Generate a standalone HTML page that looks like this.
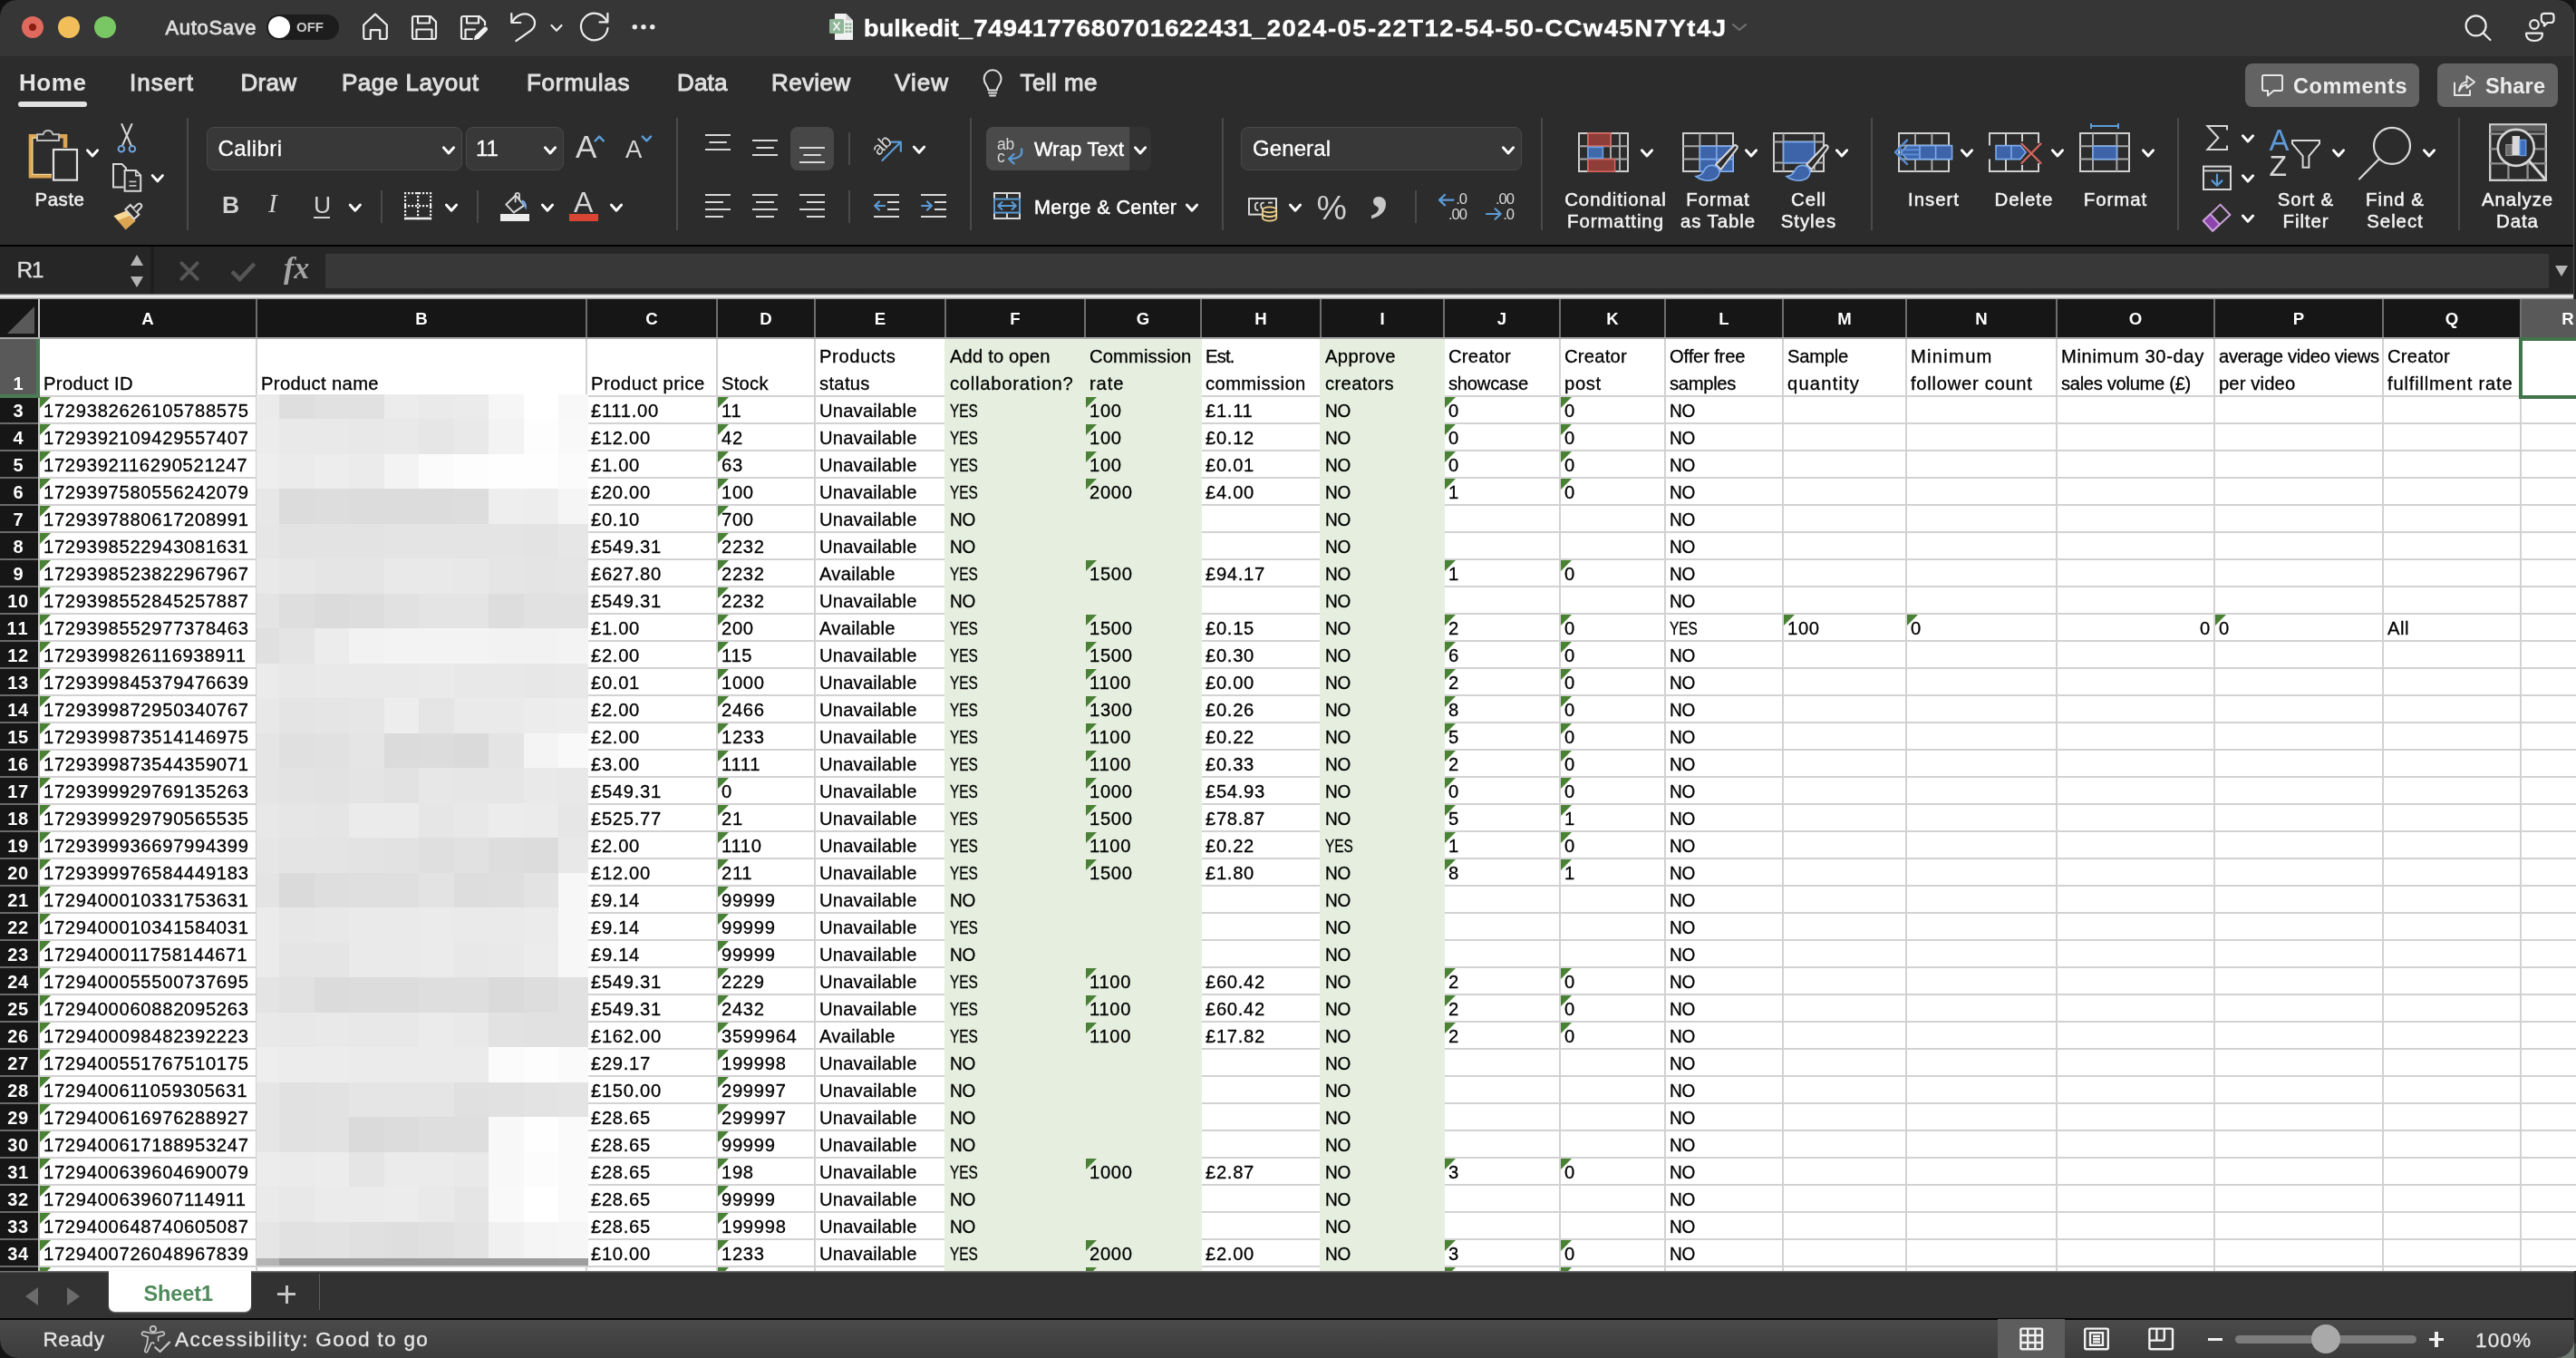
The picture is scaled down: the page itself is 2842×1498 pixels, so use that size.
<!DOCTYPE html>
<html lang="en"><head><meta charset="utf-8"><title>bulkedit - Excel</title>
<style>
html,body{margin:0;padding:0}
body{width:2842px;height:1498px;position:relative;overflow:hidden;will-change:transform;background:#2b2b2b;font-family:"Liberation Sans",sans-serif}
.a{position:absolute}
.t{position:absolute;white-space:nowrap}
.c{position:absolute;white-space:nowrap;font-size:20.2px;line-height:30px;height:30px;color:#000;letter-spacing:.7px;-webkit-text-stroke:.3px #000}
.c.tx{letter-spacing:-.1px}
.g{position:absolute;width:0;height:0;border-top:12px solid #4a8235;border-right:12px solid transparent}
svg{position:absolute;left:0;top:0;overflow:visible}
</style></head>
<body>
<div class="a" style="left:0px;top:0px;width:2842px;height:62px;background:#363636;"></div>
<div class="a" style="left:0px;top:62px;width:2842px;height:208px;background:#2c2c2c;"></div>
<div class="a" style="left:24px;top:18px;width:24px;height:24px;background:#e0695e;border-radius:50%;"></div>
<div class="a" style="left:64px;top:18px;width:24px;height:24px;background:#f1be5a;border-radius:50%;"></div>
<div class="a" style="left:104px;top:18px;width:24px;height:24px;background:#79c764;border-radius:50%;"></div>
<div class="a" style="left:32px;top:26px;width:8px;height:8px;background:#8c1d12;border-radius:50%;"></div>
<div class="t " style="left:182.5px;top:16.1px;font-size:22px;line-height:29px;color:#dedede;letter-spacing:0.66px;-webkit-text-stroke:0.8px #dedede;">AutoSave</div>
<div class="a" style="left:294px;top:16px;width:80px;height:28px;background:#1d1d1d;border-radius:14px;"></div>
<div class="a" style="left:296px;top:18px;width:24px;height:24px;background:#fff;border-radius:50%;"></div>
<div class="t " style="left:327.0px;top:20.0px;font-size:15px;line-height:20px;color:#c6c6c6;font-weight:bold;letter-spacing:0.00px;">OFF</div>
<div class="t " style="left:953.0px;top:14.5px;font-size:25px;line-height:32px;color:#fff;font-weight:bold;letter-spacing:0.17px;-webkit-text-stroke:0.4px #fff;transform:scaleX(1.08);transform-origin:0 50%;">bulkedit_</div>
<div class="t " style="left:1073.5px;top:14.5px;font-size:25px;line-height:32px;color:#fff;font-weight:bold;letter-spacing:0.58px;-webkit-text-stroke:0.4px #fff;transform:scaleX(1.12);transform-origin:0 50%;">7494177680701622431</div>
<div class="t " style="left:1381.0px;top:14.5px;font-size:25px;line-height:32px;color:#fff;font-weight:bold;letter-spacing:1.35px;-webkit-text-stroke:0.4px #fff;transform:scaleX(1.1);transform-origin:0 50%;">_2024-05-22T12-54-50-CCw45N7Yt4J</div>
<div class="t " style="left:21.0px;top:74.0px;font-size:26px;line-height:34px;color:#e4e4e4;font-weight:bold;letter-spacing:0.59px;">Home</div>
<div class="a" style="left:20px;top:112px;width:76px;height:6px;background:#e2e2e2;border-radius:3px;"></div>
<div class="t " style="left:143.0px;top:74.0px;font-size:26px;line-height:34px;color:#e0e0e0;letter-spacing:0.99px;-webkit-text-stroke:0.95px #e0e0e0;">Insert</div>
<div class="t " style="left:265.5px;top:74.0px;font-size:26px;line-height:34px;color:#e0e0e0;letter-spacing:0.28px;-webkit-text-stroke:0.95px #e0e0e0;">Draw</div>
<div class="t " style="left:377.0px;top:74.0px;font-size:26px;line-height:34px;color:#e0e0e0;letter-spacing:0.50px;-webkit-text-stroke:0.95px #e0e0e0;">Page Layout</div>
<div class="t " style="left:581.0px;top:74.0px;font-size:26px;line-height:34px;color:#e0e0e0;letter-spacing:0.73px;-webkit-text-stroke:0.95px #e0e0e0;">Formulas</div>
<div class="t " style="left:747.0px;top:74.0px;font-size:26px;line-height:34px;color:#e0e0e0;letter-spacing:0.19px;-webkit-text-stroke:0.95px #e0e0e0;">Data</div>
<div class="t " style="left:851.0px;top:74.0px;font-size:26px;line-height:34px;color:#e0e0e0;letter-spacing:0.35px;-webkit-text-stroke:0.95px #e0e0e0;">Review</div>
<div class="t " style="left:987.0px;top:74.0px;font-size:26px;line-height:34px;color:#e0e0e0;letter-spacing:1.04px;-webkit-text-stroke:0.95px #e0e0e0;">View</div>
<div class="t " style="left:1125.5px;top:74.0px;font-size:26px;line-height:34px;color:#e0e0e0;letter-spacing:0.44px;-webkit-text-stroke:0.95px #e0e0e0;">Tell me</div>
<div class="a" style="left:2477px;top:70px;width:192px;height:48px;background:#636363;border-radius:8px;"></div>
<div class="a" style="left:2689px;top:70px;width:133px;height:48px;background:#636363;border-radius:8px;"></div>
<div class="t " style="left:2530.0px;top:79.9px;font-size:23.5px;line-height:31px;color:#ececec;font-weight:bold;letter-spacing:0.58px;">Comments</div>
<div class="t " style="left:2742.0px;top:79.9px;font-size:23.5px;line-height:31px;color:#ececec;font-weight:bold;letter-spacing:0.17px;">Share</div>
<div class="a" style="left:206px;top:130px;width:2px;height:124px;background:#4a4a4a;"></div>
<div class="a" style="left:746px;top:130px;width:2px;height:124px;background:#4a4a4a;"></div>
<div class="a" style="left:1070px;top:130px;width:2px;height:124px;background:#4a4a4a;"></div>
<div class="a" style="left:1348px;top:130px;width:2px;height:124px;background:#4a4a4a;"></div>
<div class="a" style="left:1700px;top:130px;width:2px;height:124px;background:#4a4a4a;"></div>
<div class="a" style="left:2064px;top:130px;width:2px;height:124px;background:#4a4a4a;"></div>
<div class="a" style="left:2402px;top:130px;width:2px;height:124px;background:#4a4a4a;"></div>
<div class="a" style="left:2712px;top:130px;width:2px;height:124px;background:#4a4a4a;"></div>
<div class="a" style="left:420px;top:210px;width:2px;height:36px;background:#4a4a4a;"></div>
<div class="a" style="left:526px;top:210px;width:2px;height:36px;background:#4a4a4a;"></div>
<div class="a" style="left:936px;top:146px;width:2px;height:36px;background:#4a4a4a;"></div>
<div class="a" style="left:936px;top:210px;width:2px;height:36px;background:#4a4a4a;"></div>
<div class="a" style="left:1561px;top:210px;width:2px;height:36px;background:#4a4a4a;"></div>
<div class="a" style="left:228px;top:140px;width:282px;height:48px;background:#383838;border-radius:8px;box-sizing:border-box;border:1.5px solid #484848;"></div>
<div class="a" style="left:514px;top:140px;width:108px;height:48px;background:#383838;border-radius:8px;box-sizing:border-box;border:1.5px solid #484848;"></div>
<div class="a" style="left:1369px;top:140px;width:310px;height:48px;background:#383838;border-radius:8px;box-sizing:border-box;border:1.5px solid #484848;"></div>
<div class="t " style="left:240.5px;top:148.0px;font-size:24px;line-height:31px;color:#fff;letter-spacing:0.41px;-webkit-text-stroke:0.3px #fff;">Calibri</div>
<div class="t " style="left:525.0px;top:148.0px;font-size:24px;line-height:31px;color:#fff;-webkit-text-stroke:0.3px #fff;">11</div>
<div class="t " style="left:1382.0px;top:148.0px;font-size:24px;line-height:31px;color:#fff;letter-spacing:0.10px;-webkit-text-stroke:0.3px #fff;">General</div>
<div class="a" style="left:872px;top:140px;width:48px;height:48px;background:#474747;border-radius:8px;"></div>
<div class="a" style="left:1088px;top:140px;width:182px;height:48px;background:#333;border-radius:8px;"></div>
<div class="a" style="left:1088px;top:140px;width:158px;height:48px;background:#4a4a4a;border-radius:8px 0 0 8px;"></div>
<div class="t " style="left:1141.0px;top:150.7px;font-size:21.6px;line-height:28px;color:#fff;letter-spacing:0.32px;-webkit-text-stroke:0.5px #fff;">Wrap Text</div>
<div class="t " style="left:1141.0px;top:215.1px;font-size:21.6px;line-height:28px;color:#fff;letter-spacing:0.35px;-webkit-text-stroke:0.5px #fff;">Merge &amp; Center</div>
<div class="t " style="left:38.5px;top:207.1px;font-size:20.4px;line-height:27px;color:#f0f0f0;letter-spacing:0.58px;-webkit-text-stroke:0.5px #f0f0f0;">Paste</div>
<div class="t " style="left:245.0px;top:209.4px;font-size:26.5px;line-height:34px;color:#d2d2d2;font-weight:bold;">B</div>
<div class="t" style="left:296px;top:206px;font-family:'Liberation Serif',serif;font-style:italic;font-size:29px;line-height:36px;color:#d2d2d2">I</div>
<div class="t " style="left:346.0px;top:209.4px;font-size:26.5px;line-height:34px;color:#d2d2d2;">U</div>
<div class="a" style="left:346px;top:238.5px;width:18px;height:2px;background:#d2d2d2;"></div>
<div class="t " style="left:635.0px;top:138.9px;font-size:35px;line-height:46px;color:#d6d6d6;">A</div>
<div class="t " style="left:690.0px;top:146.5px;font-size:27.5px;line-height:36px;color:#d6d6d6;">A</div>
<div class="t " style="left:633.0px;top:201.9px;font-size:32px;line-height:42px;color:#d6d6d6;">A</div>
<div class="a" style="left:628px;top:236px;width:32px;height:8px;background:#d94533;"></div>
<div class="a" style="left:552px;top:236px;width:32px;height:8px;background:#ececec;"></div>
<div class="t " style="left:1452.5px;top:204.5px;font-size:37.5px;line-height:49px;color:#d0d0d0;">%</div>
<div class="t" style="left:1512px;top:157px;font-family:'Liberation Serif',serif;font-weight:bold;font-size:80px;line-height:90px;color:#c8c8c8">,</div>
<div class="t " style="left:1726.2px;top:207.1px;font-size:20.4px;line-height:27px;color:#f4f4f4;letter-spacing:0.95px;-webkit-text-stroke:0.5px #f4f4f4;">Conditional</div>
<div class="t " style="left:1729.0px;top:230.9px;font-size:20.4px;line-height:27px;color:#f4f4f4;letter-spacing:0.95px;-webkit-text-stroke:0.5px #f4f4f4;">Formatting</div>
<div class="t " style="left:1860.3px;top:207.1px;font-size:20.4px;line-height:27px;color:#f4f4f4;letter-spacing:0.95px;-webkit-text-stroke:0.5px #f4f4f4;">Format</div>
<div class="t " style="left:1853.9px;top:230.9px;font-size:20.4px;line-height:27px;color:#f4f4f4;letter-spacing:0.95px;-webkit-text-stroke:0.5px #f4f4f4;">as Table</div>
<div class="t " style="left:1976.0px;top:207.1px;font-size:20.4px;line-height:27px;color:#f4f4f4;letter-spacing:0.95px;-webkit-text-stroke:0.5px #f4f4f4;">Cell</div>
<div class="t " style="left:1964.8px;top:230.9px;font-size:20.4px;line-height:27px;color:#f4f4f4;letter-spacing:0.95px;-webkit-text-stroke:0.5px #f4f4f4;">Styles</div>
<div class="t " style="left:2105.1px;top:207.1px;font-size:20.4px;line-height:27px;color:#f4f4f4;letter-spacing:0.95px;-webkit-text-stroke:0.5px #f4f4f4;">Insert</div>
<div class="t " style="left:2200.6px;top:207.1px;font-size:20.4px;line-height:27px;color:#f4f4f4;letter-spacing:0.95px;-webkit-text-stroke:0.5px #f4f4f4;">Delete</div>
<div class="t " style="left:2298.8px;top:207.1px;font-size:20.4px;line-height:27px;color:#f4f4f4;letter-spacing:0.95px;-webkit-text-stroke:0.5px #f4f4f4;">Format</div>
<div class="t " style="left:2512.8px;top:207.1px;font-size:20.4px;line-height:27px;color:#f4f4f4;letter-spacing:0.95px;-webkit-text-stroke:0.5px #f4f4f4;">Sort &amp;</div>
<div class="t " style="left:2518.5px;top:230.9px;font-size:20.4px;line-height:27px;color:#f4f4f4;letter-spacing:0.95px;-webkit-text-stroke:0.5px #f4f4f4;">Filter</div>
<div class="t " style="left:2610.1px;top:207.1px;font-size:20.4px;line-height:27px;color:#f4f4f4;letter-spacing:0.95px;-webkit-text-stroke:0.5px #f4f4f4;">Find &amp;</div>
<div class="t " style="left:2611.3px;top:230.9px;font-size:20.4px;line-height:27px;color:#f4f4f4;letter-spacing:0.95px;-webkit-text-stroke:0.5px #f4f4f4;">Select</div>
<div class="t " style="left:2737.9px;top:207.1px;font-size:20.4px;line-height:27px;color:#f4f4f4;letter-spacing:0.95px;-webkit-text-stroke:0.5px #f4f4f4;">Analyze</div>
<div class="t " style="left:2754.0px;top:230.9px;font-size:20.4px;line-height:27px;color:#f4f4f4;letter-spacing:0.95px;-webkit-text-stroke:0.5px #f4f4f4;">Data</div>
<div class="a" style="left:0px;top:270px;width:2842px;height:2.3px;background:#000;"></div>
<div class="a" style="left:0px;top:272px;width:2842px;height:52px;background:#262626;"></div>
<div class="a" style="left:166px;top:272px;width:4px;height:52px;background:#1f1f1f;"></div>
<div class="t " style="left:18.8px;top:282.1px;font-size:24px;line-height:31px;color:#dcdcdc;-webkit-text-stroke:0.5px #dcdcdc;letter-spacing:-1.2px;">R1</div>
<div class="a" style="left:144px;top:281px;width:0;height:0;border-left:7.5px solid transparent;border-right:7.5px solid transparent;border-bottom:12px solid #b4b4b4"></div>
<div class="a" style="left:144px;top:305px;width:0;height:0;border-left:7.5px solid transparent;border-right:7.5px solid transparent;border-top:12px solid #b4b4b4"></div>
<div class="a" style="left:359px;top:280px;width:2453px;height:38px;background:#383838;"></div>
<div class="t" style="left:313px;top:277px;font-family:'Liberation Serif',serif;font-style:italic;font-weight:bold;font-size:34px;line-height:38px;color:#a4a4a4;letter-spacing:0px">fx</div>
<div class="a" style="left:2819px;top:293px;width:0;height:0;border-left:7.5px solid transparent;border-right:7.5px solid transparent;border-top:12px solid #b4b4b4"></div>
<div class="a" style="left:0px;top:323.6px;width:2842px;height:6.6px;background:linear-gradient(#3c3c3c 0,#a8a8a8 16%,#f0f0f0 36%,#f6f6f6 52%,#e0e0e0 68%,#b0b0b0 86%,#8a8a8a 100%);"></div>
<svg width="2842" height="130" viewBox="0 0 2842 130"><path stroke="#ececec" stroke-width="2.2" fill="none" stroke-linecap="round" stroke-linejoin="round" d="M401.2 27.5 L414 15.6 L426.8 27.5 V41 a2 2 0 0 1 -2 2 H419.2 V33.2 H408.8 V43 H403.2 a2 2 0 0 1 -2 -2 Z"/><path stroke="#ececec" stroke-width="2.2" fill="none" stroke-linecap="round" stroke-linejoin="round" d="M457 18 H475 L481 24 V41 a2 2 0 0 1 -2 2 H457 a2 2 0 0 1 -2 -2 V20 a2 2 0 0 1 2 -2 Z"/><path stroke="#ececec" stroke-width="2.2" fill="none" stroke-linecap="round" stroke-linejoin="round" d="M461 18.5 V25.5 H474 V18.5"/><path stroke="#ececec" stroke-width="2.2" fill="none" stroke-linecap="round" stroke-linejoin="round" d="M459.5 42.5 V32.5 H476.5 V42.5"/><path stroke="#ececec" stroke-width="2.2" fill="none" stroke-linecap="round" stroke-linejoin="round" d="M511 18 H529 L535 24 V29 M521 43 H511 a2 2 0 0 1 -2 -2 V20 a2 2 0 0 1 2 -2"/><path stroke="#ececec" stroke-width="2.2" fill="none" stroke-linecap="round" stroke-linejoin="round" d="M515 18.5 V25.5 H528 V18.5"/><path stroke="#ececec" stroke-width="2.2" fill="none" stroke-linecap="round" stroke-linejoin="round" d="M513.5 42.5 V32.5 H524"/><path d="M522 45.2 L523.4 39.2 L533 29.8 a3.2 3.2 0 0 1 4.6 4.6 L528.2 43.6 Z" fill="#f2f2f2" stroke="#363636" stroke-width="1.2"/><path stroke="#ececec" stroke-width="2.2" fill="none" stroke-linecap="round" stroke-linejoin="round" d="M564.3 15 V25 H574.3"/><path stroke="#ececec" stroke-width="2.2" fill="none" stroke-linecap="round" stroke-linejoin="round" d="M565 24.4 C569 17.5 577.5 13.2 584 16.4 C591.5 20 591.8 28.6 586 33.4 L569.4 45.2"/><path stroke="#ececec" stroke-width="2.2" fill="none" stroke-linecap="round" stroke-linejoin="round" stroke-width="2.6" d="M608.5 28 L614 33.8 L619.5 28"/><path stroke="#ececec" stroke-width="2.2" fill="none" stroke-linecap="round" stroke-linejoin="round" d="M661.5 24.4 H670.4 V14.8"/><path stroke="#ececec" stroke-width="2.2" fill="none" stroke-linecap="round" stroke-linejoin="round" d="M669.6 24.2 A14.8 14.8 0 1 0 670.5 31"/><circle cx="700.3" cy="29.8" r="2.7" fill="#ececec"/><circle cx="710" cy="29.8" r="2.7" fill="#ececec"/><circle cx="719.8" cy="29.8" r="2.7" fill="#ececec"/><path d="M921 15 H933.5 L941 22.5 V44 H921 Z" fill="#f1f1f1"/><path d="M933.5 15 L941 22.5 H933.5 Z" fill="#cfcfcf"/><rect x="915" y="21" width="16" height="16" rx="1.5" fill="#8db596"/><path d="M919.5 24.5 L926.5 33.5 M926.5 24.5 L919.5 33.5" stroke="#f4f4f4" stroke-width="1.8" fill="none"/><rect x="932.5" y="25.5" width="3" height="2.4" fill="#8db596"/><rect x="936.5" y="25.5" width="3" height="2.4" fill="#8db596"/><rect x="932.5" y="29.5" width="3" height="2.4" fill="#8db596"/><rect x="936.5" y="29.5" width="3" height="2.4" fill="#8db596"/><rect x="932.5" y="33.5" width="3" height="2.4" fill="#8db596"/><rect x="936.5" y="33.5" width="3" height="2.4" fill="#8db596"/><path d="M1912 27.2 L1919 33 L1926 27.2" stroke="#6e6e6e" stroke-width="2.2" fill="none" stroke-linecap="round" stroke-linejoin="round"/><circle stroke="#ececec" stroke-width="2.2" fill="none" stroke-linecap="round" stroke-linejoin="round" cx="2731.6" cy="28.4" r="11"/><path stroke="#ececec" stroke-width="2.2" fill="none" stroke-linecap="round" stroke-linejoin="round" d="M2739.6 36.4 L2747.4 44"/><circle stroke="#ececec" stroke-width="2.2" fill="none" stroke-linecap="round" stroke-linejoin="round" cx="2796" cy="27" r="4.8"/><path stroke="#ececec" stroke-width="2.2" fill="none" stroke-linecap="round" stroke-linejoin="round" d="M2787.2 36.6 H2804.8 C2805.6 42 2801.5 45 2796 45 C2790.5 45 2786.4 42 2787.2 36.6 Z"/><path stroke="#ececec" stroke-width="2.2" fill="none" stroke-linecap="round" stroke-linejoin="round" stroke-width="2" d="M2806.5 14.8 H2814.5 a3 3 0 0 1 3 3 V22 a3 3 0 0 1 -3 3 H2810.5 L2806.8 28.6 V25 a3 3 0 0 1 -3 -3 V17.8 a3 3 0 0 1 2.7 -3 Z"/><path stroke="#dedede" stroke-width="2" fill="none" stroke-linecap="round" stroke-linejoin="round" d="M1090.5 99.5 C1090.5 95 1085.6 93 1085.6 86.8 A9.5 9.5 0 0 1 1104.6 86.8 C1104.6 93 1099.7 95 1099.7 99.5 Z"/><path stroke="#dedede" stroke-width="2" fill="none" stroke-linecap="round" stroke-linejoin="round" d="M1091 102.6 H1099.2 M1092.2 105.6 H1098"/><path stroke="#e6e6e6" stroke-width="2" fill="none" stroke-linejoin="round" stroke-linecap="round" d="M2497.5 83 H2516.5 a1.5 1.5 0 0 1 1.5 1.5 V98.5 a1.5 1.5 0 0 1 -1.5 1.5 H2508.5 L2502 105.5 V100 H2497.5 a1.5 1.5 0 0 1 -1.5 -1.5 V84.500 a1.5 1.5 0 0 1 1.5 -1.5 Z"/><path stroke="#e6e6e6" stroke-width="2" fill="none" stroke-linejoin="round" stroke-linecap="round" d="M2708 91.5 V105 H2725 V100"/><path stroke="#e6e6e6" stroke-width="2" fill="none" stroke-linejoin="round" stroke-linecap="round" d="M2713 100.5 C2713.5 94 2717 90.5 2721.5 90.5 V84 L2730 90.5 L2721.5 97 V93.5 C2717.5 93.5 2715 96 2713 100.5 Z"/></svg>
<svg width="2842" height="330" viewBox="0 0 2842 330"><path d="M96.4 165.8 L102 172 L107.6 165.8" stroke="#fff" stroke-width="2.9" fill="none" stroke-linecap="round" stroke-linejoin="round"/><path d="M168.20000000000002 193.60000000000002 L173.8 199.8 L179.4 193.60000000000002" stroke="#fff" stroke-width="2.9" fill="none" stroke-linecap="round" stroke-linejoin="round"/><path d="M489.4 162.8 L495 169 L500.6 162.8" stroke="#fff" stroke-width="2.9" fill="none" stroke-linecap="round" stroke-linejoin="round"/><path d="M601.4 162.8 L607 169 L612.6 162.8" stroke="#fff" stroke-width="2.9" fill="none" stroke-linecap="round" stroke-linejoin="round"/><path d="M386.2 226.0 L391.8 232.2 L397.40000000000003 226.0" stroke="#fff" stroke-width="2.9" fill="none" stroke-linecap="round" stroke-linejoin="round"/><path d="M492.4 226.0 L498 232.2 L503.6 226.0" stroke="#fff" stroke-width="2.9" fill="none" stroke-linecap="round" stroke-linejoin="round"/><path d="M598.4 226.0 L604 232.2 L609.6 226.0" stroke="#fff" stroke-width="2.9" fill="none" stroke-linecap="round" stroke-linejoin="round"/><path d="M674.4 226.0 L680 232.2 L685.6 226.0" stroke="#fff" stroke-width="2.9" fill="none" stroke-linecap="round" stroke-linejoin="round"/><path d="M1008.4 162.10000000000002 L1014 168.3 L1019.6 162.10000000000002" stroke="#fff" stroke-width="2.9" fill="none" stroke-linecap="round" stroke-linejoin="round"/><path d="M1252.4 162.8 L1258 169 L1263.6 162.8" stroke="#fff" stroke-width="2.9" fill="none" stroke-linecap="round" stroke-linejoin="round"/><path d="M1309.4 226.0 L1315 232.2 L1320.6 226.0" stroke="#fff" stroke-width="2.9" fill="none" stroke-linecap="round" stroke-linejoin="round"/><path d="M1658.4 162.8 L1664 169 L1669.6 162.8" stroke="#fff" stroke-width="2.9" fill="none" stroke-linecap="round" stroke-linejoin="round"/><path d="M1423.4 226.0 L1429 232.2 L1434.6 226.0" stroke="#fff" stroke-width="2.9" fill="none" stroke-linecap="round" stroke-linejoin="round"/><path d="M1811.4 165.8 L1817 172 L1822.6 165.8" stroke="#fff" stroke-width="2.9" fill="none" stroke-linecap="round" stroke-linejoin="round"/><path d="M1926.4 165.8 L1932 172 L1937.6 165.8" stroke="#fff" stroke-width="2.9" fill="none" stroke-linecap="round" stroke-linejoin="round"/><path d="M2026.4 165.8 L2032 172 L2037.6 165.8" stroke="#fff" stroke-width="2.9" fill="none" stroke-linecap="round" stroke-linejoin="round"/><path d="M2164.4 165.8 L2170 172 L2175.6 165.8" stroke="#fff" stroke-width="2.9" fill="none" stroke-linecap="round" stroke-linejoin="round"/><path d="M2264.4 165.8 L2270 172 L2275.6 165.8" stroke="#fff" stroke-width="2.9" fill="none" stroke-linecap="round" stroke-linejoin="round"/><path d="M2364.4 165.8 L2370 172 L2375.6 165.8" stroke="#fff" stroke-width="2.9" fill="none" stroke-linecap="round" stroke-linejoin="round"/><path d="M2474.4 149.8 L2480 156 L2485.6 149.8" stroke="#fff" stroke-width="2.9" fill="none" stroke-linecap="round" stroke-linejoin="round"/><path d="M2474.4 193.8 L2480 200 L2485.6 193.8" stroke="#fff" stroke-width="2.9" fill="none" stroke-linecap="round" stroke-linejoin="round"/><path d="M2474.4 238.0 L2480 244.2 L2485.6 238.0" stroke="#fff" stroke-width="2.9" fill="none" stroke-linecap="round" stroke-linejoin="round"/><path d="M2574.4 165.8 L2580 172 L2585.6 165.8" stroke="#fff" stroke-width="2.9" fill="none" stroke-linecap="round" stroke-linejoin="round"/><path d="M2674.4 165.8 L2680 172 L2685.6 165.8" stroke="#fff" stroke-width="2.9" fill="none" stroke-linecap="round" stroke-linejoin="round"/><path d="M42 150.3 H34 V194.2 H57" stroke="#dca552" stroke-width="4.6" fill="none" /><path d="M65 150.3 H72 V163" stroke="#dca552" stroke-width="4.6" fill="none" /><path d="M41 152.2 H35.8 V192.4 H57" stroke="#f6d999" stroke-width="1.2" fill="none" /><path d="M41 155 V148.2 H47.6 A5.6 5.6 0 0 1 58.4 148.2 H65 V155 Z" fill="#2c2c2c" stroke="#bdbdbd" stroke-width="2"/><rect x="59" y="165" width="26" height="33.6" fill="#2c2c2c" stroke="#e2e2e2" stroke-width="2.2"/><path d="M134.4 137 L144.6 160.2 M145.4 137 L135.2 160.2" stroke="#d8d8d8" stroke-width="2" fill="none" stroke-linecap="round" stroke-linejoin="round"/><circle cx="133.9" cy="164.3" r="3.3" stroke="#6fa3dd" stroke-width="2" fill="none"/><circle cx="145.9" cy="164.3" r="3.3" stroke="#6fa3dd" stroke-width="2" fill="none"/><path d="M136.5 206.4 H125 V181 H134.5 L139 185.5 V187" stroke="#d8d8d8" stroke-width="2" fill="none" /><path d="M137.6 188 H150 L155.2 193.4 V210.8 H137.6 Z" fill="#2c2c2c" stroke="#d8d8d8" stroke-width="2"/><path d="M149.8 188.4 V193.8 H155" stroke="#d8d8d8" stroke-width="1.6" fill="none" /><path d="M142.5 200.4 H150.4 M142.5 204.8 H150.4" stroke="#bdbdbd" stroke-width="1.8" fill="none" /><path d="M125.5 238.2 L139.5 232.4 L149.6 243.8 L138.6 253.4 Z" fill="#dca552"/><path d="M125.5 238.2 L139.5 232.4 L144.2 237.6 L130.4 243 Z" fill="#f5d692"/><path d="M138.4 231 L143.8 226 L153.4 236.6 L148 241.6 Z" fill="#2c2c2c" stroke="#d8d8d8" stroke-width="2"/><path d="M147.2 229.6 L152.2 225 a2.6 2.6 0 0 1 3.6 3.6 L151 233.8" fill="#2c2c2c" stroke="#d8d8d8" stroke-width="2"/><path d="M656.6 155.4 L661.2 150.6 L665.8 155.4" stroke="#5b9bd5" stroke-width="2.5" fill="none" stroke-linecap="round" stroke-linejoin="round"/><path d="M708.8 150.6 L713.4 155.4 L718 150.6" stroke="#5b9bd5" stroke-width="2.5" fill="none" stroke-linecap="round" stroke-linejoin="round"/><rect x="446" y="212" width="2.2" height="2.2" fill="#f0f0f0"/><rect x="446" y="216" width="2.2" height="2.2" fill="#f0f0f0"/><rect x="446" y="220" width="2.2" height="2.2" fill="#f0f0f0"/><rect x="446" y="224" width="2.2" height="2.2" fill="#f0f0f0"/><rect x="446" y="226" width="2.2" height="2.2" fill="#f0f0f0"/><rect x="446" y="228" width="2.2" height="2.2" fill="#f0f0f0"/><rect x="446" y="232" width="2.2" height="2.2" fill="#f0f0f0"/><rect x="446" y="236" width="2.2" height="2.2" fill="#f0f0f0"/><rect x="446" y="240" width="2.2" height="2.2" fill="#f0f0f0"/><rect x="450" y="212" width="2.2" height="2.2" fill="#f0f0f0"/><rect x="450" y="226" width="2.2" height="2.2" fill="#f0f0f0"/><rect x="454" y="212" width="2.2" height="2.2" fill="#f0f0f0"/><rect x="454" y="226" width="2.2" height="2.2" fill="#f0f0f0"/><rect x="458" y="212" width="2.2" height="2.2" fill="#f0f0f0"/><rect x="458" y="226" width="2.2" height="2.2" fill="#f0f0f0"/><rect x="460" y="212" width="2.2" height="2.2" fill="#f0f0f0"/><rect x="460" y="216" width="2.2" height="2.2" fill="#f0f0f0"/><rect x="460" y="220" width="2.2" height="2.2" fill="#f0f0f0"/><rect x="460" y="224" width="2.2" height="2.2" fill="#f0f0f0"/><rect x="460" y="228" width="2.2" height="2.2" fill="#f0f0f0"/><rect x="460" y="232" width="2.2" height="2.2" fill="#f0f0f0"/><rect x="460" y="236" width="2.2" height="2.2" fill="#f0f0f0"/><rect x="460" y="240" width="2.2" height="2.2" fill="#f0f0f0"/><rect x="462" y="212" width="2.2" height="2.2" fill="#f0f0f0"/><rect x="462" y="226" width="2.2" height="2.2" fill="#f0f0f0"/><rect x="466" y="212" width="2.2" height="2.2" fill="#f0f0f0"/><rect x="466" y="226" width="2.2" height="2.2" fill="#f0f0f0"/><rect x="470" y="212" width="2.2" height="2.2" fill="#f0f0f0"/><rect x="470" y="226" width="2.2" height="2.2" fill="#f0f0f0"/><rect x="474" y="212" width="2.2" height="2.2" fill="#f0f0f0"/><rect x="474" y="216" width="2.2" height="2.2" fill="#f0f0f0"/><rect x="474" y="220" width="2.2" height="2.2" fill="#f0f0f0"/><rect x="474" y="224" width="2.2" height="2.2" fill="#f0f0f0"/><rect x="474" y="226" width="2.2" height="2.2" fill="#f0f0f0"/><rect x="474" y="228" width="2.2" height="2.2" fill="#f0f0f0"/><rect x="474" y="232" width="2.2" height="2.2" fill="#f0f0f0"/><rect x="474" y="236" width="2.2" height="2.2" fill="#f0f0f0"/><rect x="474" y="240" width="2.2" height="2.2" fill="#f0f0f0"/><path d="M446 241 H476" stroke="#f0f0f0" stroke-width="2.6" fill="none" /><path d="M558.4 225.6 L569 215.6 L578.2 226.6 L566.8 234.4 Z" fill="none" stroke="#d8d8d8" stroke-width="2" stroke-linejoin="round"/><path d="M568.6 222.5 V215 a2.2 2.2 0 0 1 4.4 0 V219.6" stroke="#d8d8d8" stroke-width="1.8" fill="none" stroke-linecap="round" stroke-linejoin="round"/><path d="M576.6 220.4 C581 222.4 581.6 227.8 580.2 232 C579.4 228.6 577.6 225.6 574.4 223.6 Z" fill="#7aa9e0"/><path d="M778 149 H806" stroke="#d8d8d8" stroke-width="2" fill="none" /><path d="M782.4 157 H801.8" stroke="#d8d8d8" stroke-width="2" fill="none" /><path d="M778 165 H806" stroke="#d8d8d8" stroke-width="2" fill="none" /><path d="M830 155 H858" stroke="#d8d8d8" stroke-width="2" fill="none" /><path d="M834.4 163 H853.8" stroke="#d8d8d8" stroke-width="2" fill="none" /><path d="M830 171 H858" stroke="#d8d8d8" stroke-width="2" fill="none" /><path d="M882 163 H910" stroke="#d8d8d8" stroke-width="2" fill="none" /><path d="M886.4 171 H905.8" stroke="#d8d8d8" stroke-width="2" fill="none" /><path d="M882 179 H910" stroke="#d8d8d8" stroke-width="2" fill="none" /><path d="M778 215 H806" stroke="#d8d8d8" stroke-width="2" fill="none" /><path d="M778 223 H798" stroke="#d8d8d8" stroke-width="2" fill="none" /><path d="M778 231 H806" stroke="#d8d8d8" stroke-width="2" fill="none" /><path d="M778 239 H798" stroke="#d8d8d8" stroke-width="2" fill="none" /><path d="M830 215 H858" stroke="#d8d8d8" stroke-width="2" fill="none" /><path d="M834 223 H854" stroke="#d8d8d8" stroke-width="2" fill="none" /><path d="M830 231 H858" stroke="#d8d8d8" stroke-width="2" fill="none" /><path d="M834 239 H854" stroke="#d8d8d8" stroke-width="2" fill="none" /><path d="M882 215 H910" stroke="#d8d8d8" stroke-width="2" fill="none" /><path d="M890 223 H910" stroke="#d8d8d8" stroke-width="2" fill="none" /><path d="M882 231 H910" stroke="#d8d8d8" stroke-width="2" fill="none" /><path d="M890 239 H910" stroke="#d8d8d8" stroke-width="2" fill="none" /><text x="0" y="0" transform="translate(969.5 172.5) rotate(-45)" font-family="Liberation Sans,sans-serif" font-size="20" fill="#d8d8d8">ab</text><path d="M973.4 177 L993.4 157 M983.6 156.6 H993.8 V166.8" stroke="#5b9bd5" stroke-width="2.2" fill="none" stroke-linecap="round" stroke-linejoin="round"/><path d="M964 215 H992 M964 239 H992 M979 223 H992 M979 231 H992" stroke="#d8d8d8" stroke-width="2" fill="none" /><path d="M976 227 H965.5 M970 222.4 L965.2 227 L970 231.6" stroke="#5b9bd5" stroke-width="2.2" fill="none" stroke-linecap="round" stroke-linejoin="round"/><path d="M1016 215 H1044 M1016 239 H1044 M1031 223 H1044 M1031 231 H1044" stroke="#d8d8d8" stroke-width="2" fill="none" /><path d="M1017 227 H1027.5 M1023 222.4 L1027.8 227 L1023 231.6" stroke="#5b9bd5" stroke-width="2.2" fill="none" stroke-linecap="round" stroke-linejoin="round"/><text x="1100" y="165" font-family="Liberation Sans,sans-serif" font-size="17.5" fill="#d8d8d8" letter-spacing="-0.3">ab</text><text x="1100" y="178.6" font-family="Liberation Sans,sans-serif" font-size="17.5" fill="#d8d8d8">c</text><path d="M1127 164.4 C1128.4 171.6 1124.4 175.2 1113.4 175.2 M1118.6 170 L1113 175.2 L1118.6 180.4" stroke="#5b9bd5" stroke-width="2.2" fill="none" stroke-linecap="round" stroke-linejoin="round"/><rect x="1097" y="213" width="28" height="28" fill="none" stroke="#d8d8d8" stroke-width="2"/><path d="M1111 213 V219.6 M1111 234.6 V241" stroke="#d8d8d8" stroke-width="2" fill="none" /><rect x="1097" y="219.6" width="28" height="15" fill="none" stroke="#5b9bd5" stroke-width="2"/><path d="M1101.4 227 H1120.6 M1105.4 223 L1101.2 227 L1105.4 231 M1116.6 223 L1120.8 227 L1116.6 231" stroke="#5b9bd5" stroke-width="2" fill="none" stroke-linecap="round" stroke-linejoin="round"/><rect x="1378" y="219" width="30" height="17.6" fill="none" stroke="#d8d8d8" stroke-width="2"/><path d="M1387.6 223.6 C1383.8 223.6 1383.8 232 1387.6 232 M1394 223.6 C1390.2 223.6 1390.2 228 1393 231" stroke="#d8d8d8" stroke-width="1.8" fill="none" stroke-linecap="round" stroke-linejoin="round"/><path d="M1399 223.6 H1404" stroke="#d8d8d8" stroke-width="1.8" fill="none" /><path d="M1393 231.4 V240.6 A7.6 3 0 0 0 1408.2 240.6 V231.4 Z" fill="#2c2c2c" stroke="#f2d388" stroke-width="1.8"/><ellipse cx="1400.6" cy="231.4" rx="7.6" ry="3" fill="#2c2c2c" stroke="#f2d388" stroke-width="1.8"/><path d="M1393 236 A7.6 3 0 0 0 1408.2 236" fill="none" stroke="#f2d388" stroke-width="1.8"/><text x="1618" y="225" text-anchor="end" font-family="Liberation Sans,sans-serif" font-size="16.6" fill="#d8d8d8" letter-spacing="-1">.0</text><text x="1618" y="242.2" text-anchor="end" font-family="Liberation Sans,sans-serif" font-size="16.6" fill="#d8d8d8" letter-spacing="-1">.00</text><path d="M1588 220.6 H1603.6 M1594 214.8 L1588 220.6 L1594 226.4" stroke="#5b9bd5" stroke-width="2.2" fill="none" stroke-linecap="round" stroke-linejoin="round"/><text x="1670" y="225" text-anchor="end" font-family="Liberation Sans,sans-serif" font-size="16.6" fill="#d8d8d8" letter-spacing="-1">.00</text><text x="1670" y="242.2" text-anchor="end" font-family="Liberation Sans,sans-serif" font-size="16.6" fill="#d8d8d8" letter-spacing="-1">.0</text><path d="M1640 236 H1655.6 M1649.6 230.2 L1655.6 236 L1649.6 241.8" stroke="#5b9bd5" stroke-width="2.2" fill="none" stroke-linecap="round" stroke-linejoin="round"/><rect x="1742" y="147" width="54" height="42" fill="none" stroke="#cfcfcf" stroke-width="2"/><path d="M1752 147 V189M1777 147 V189M1787 147 V189M1742 161.3 H1796M1742 175.6 H1796" stroke="#a8a8a8" stroke-width="2" fill="none" /><rect x="1752" y="147" width="25" height="14" fill="#8f3d38" stroke="#d4665e" stroke-width="1.6"/><rect x="1752" y="175.6" width="29.6" height="13.6" fill="#8f3d38" stroke="#d4665e" stroke-width="1.6"/><rect x="1752" y="162.4" width="16.4" height="12" fill="#3f69a8" stroke="#6a9fe0" stroke-width="1.6"/><rect x="1857" y="147" width="55" height="42" fill="none" stroke="#cfcfcf" stroke-width="2"/><path d="M1875.4 147 V189M1893.8 147 V189M1857 161.3 H1912M1857 175.6 H1912" stroke="#a8a8a8" stroke-width="2" fill="none" /><rect x="1875.4" y="161.3" width="36.6" height="27.8" fill="#3d63a9" stroke="#7cabec" stroke-width="1.6"/><path d="M1893.8 161.3 V189 M1875.4 175.6 H1912" stroke="#7cabec" stroke-width="1.6" fill="none" /><path d="M1893 181.5 L1913 160.8 a2.2 2.2 0 0 1 3.2 3 L1898.6 187 Z" fill="#2c2c2c" stroke="#d8d8d8" stroke-width="2" stroke-linejoin="round"/><path d="M1871 194.6 C1877 194 1879 190.6 1881 186.6 C1883.4 182.4 1890 180.6 1894.6 184.6 C1899 188.8 1897 195.4 1890.6 198 C1884 200.6 1875.4 198.6 1871 194.6 Z" fill="#3d63a9" stroke="#7cabec" stroke-width="1.6"/><rect x="1957" y="147" width="55" height="42" fill="none" stroke="#cfcfcf" stroke-width="2"/><path d="M1967.6 147 V189M2001.8 147 V189M1957 156.6 H2012M1957 179.6 H2012" stroke="#a8a8a8" stroke-width="2" fill="none" /><rect x="1967.6" y="156.6" width="34.2" height="23" fill="#3d63a9" stroke="#7cabec" stroke-width="1.6"/><path d="M1993 181.5 L2013 160.8 a2.2 2.2 0 0 1 3.2 3 L1998.6 187 Z" fill="#2c2c2c" stroke="#d8d8d8" stroke-width="2" stroke-linejoin="round"/><path d="M1971 194.6 C1977 194 1979 190.6 1981 186.6 C1983.4 182.4 1990 180.6 1994.6 184.6 C1999 188.8 1997 195.4 1990.6 198 C1984 200.6 1975.4 198.6 1971 194.6 Z" fill="#3d63a9" stroke="#7cabec" stroke-width="1.6"/><rect x="2095" y="147" width="55" height="42" fill="none" stroke="#cfcfcf" stroke-width="2"/><path d="M2113 147 V189M2131.4 147 V189M2095 160.6 H2150M2095 175.6 H2150" stroke="#a8a8a8" stroke-width="2" fill="none" /><path d="M2104 160.6 H2153.6 V175.6 H2104 L2097 168.1 Z" fill="#3d63a9" stroke="#7cabec" stroke-width="1.6"/><path d="M2118 161 V175.4 M2135.6 161 V175.4" stroke="#7cabec" stroke-width="1.6" fill="none" /><path d="M2104 154.6 L2091 167.8 L2104 181" stroke="#5b8fd6" stroke-width="2.4" fill="none" stroke-linecap="round" stroke-linejoin="round"/><path d="M2094 165.2 H2117 M2094 170.6 H2117" stroke="#5b8fd6" stroke-width="2" fill="none" /><path d="M2195 160.6 V147 H2249 V158 M2195 175.6 V189 H2249 V180 M2213 147 V160 M2231 147 V156 M2213 176 V189 M2231 182 V189" fill="none" stroke="#cfcfcf" stroke-width="2"/><path d="M2202 160.6 H2229 L2235 168.1 L2229 175.6 H2202 Z" fill="#3d63a9" stroke="#7cabec" stroke-width="1.6"/><path d="M2219 161 V175.4" stroke="#7cabec" stroke-width="1.6" fill="none" /><path d="M2230.4 158.6 L2251.6 180 M2251.6 158.6 L2230.4 180" stroke="#d8675c" stroke-width="2.2" fill="none" stroke-linecap="round" stroke-linejoin="round"/><rect x="2295" y="147" width="54" height="42" fill="none" stroke="#cfcfcf" stroke-width="2"/><path d="M2309 147 V189M2335.4 147 V189M2295 161.3 H2349M2295 175.6 H2349" stroke="#a8a8a8" stroke-width="2" fill="none" /><rect x="2309" y="161.3" width="26.4" height="14.3" fill="#3d63a9" stroke="#7cabec" stroke-width="1.6"/><path d="M2307 139 H2337 M2307 136 V142 M2337 136 V142" stroke="#5b9bd5" stroke-width="2" fill="none" /><path d="M2457 143.4 V139 H2435.4 L2447.4 152 L2435.4 165 H2457 V160.6" fill="none" stroke="#d8d8d8" stroke-width="2" stroke-linejoin="miter"/><rect x="2431" y="183.6" width="30" height="25.4" fill="none" stroke="#d8d8d8" stroke-width="2"/><path d="M2431 188.4 H2461" stroke="#d8d8d8" stroke-width="1.8" fill="none" /><path d="M2446 192.6 V204.4 M2440.6 199.4 L2446 204.8 L2451.4 199.4" stroke="#5b9bd5" stroke-width="2.2" fill="none" stroke-linecap="round" stroke-linejoin="round"/><path d="M2449.6 225.6 L2460.4 237 L2441.2 254.8 L2430.8 243.6 Z" fill="none" stroke="#c9a0d8" stroke-width="2" stroke-linejoin="round"/><path d="M2438.6 236.2 L2449 247.6 L2441.2 254.8 L2430.8 243.6 Z" fill="#8d44ad" stroke="#c9a0d8" stroke-width="2" stroke-linejoin="round"/><text x="2503.4" y="166" font-family="Liberation Sans,sans-serif" font-size="33" fill="#5e9ad8">A</text><text x="2503.6" y="193.8" font-family="Liberation Sans,sans-serif" font-size="32" fill="#d8d8d8">Z</text><path d="M2529 155 H2559 V158.4 L2547.4 172 V184.8 H2540.6 V172 L2529 158.4 Z" fill="none" stroke="#d8d8d8" stroke-width="2" stroke-linejoin="miter"/><circle cx="2639" cy="160.8" r="20" fill="none" stroke="#d8d8d8" stroke-width="2.2"/><path d="M2624.6 175.4 L2603 197.4" stroke="#d8d8d8" stroke-width="2.2" fill="none" stroke-linecap="round" stroke-linejoin="round"/><rect x="2747.2" y="137.4" width="61.6" height="61.4" fill="none" stroke="#cdcdcd" stroke-width="2.4"/><rect x="2748.4" y="138.6" width="59.2" height="6.2" fill="#5c5c5c"/><path d="M2747 147.6 H2809 M2747 164.4 H2809 M2747 180.4 H2809 M2767.4 180.4 V199 M2788.6 180.4 V199" stroke="#8e8e8e" stroke-width="2.4" fill="none" /><circle cx="2775.8" cy="162.9" r="20" fill="#2c2c2c" stroke="#d6d6d6" stroke-width="2.6"/><rect x="2764.8" y="159.6" width="6.8" height="12" fill="#6c6c6c" stroke="#9a9a9a" stroke-width="1"/><rect x="2771.6" y="150" width="8.4" height="21.6" fill="#d8d8d8"/><rect x="2780" y="154.4" width="6.8" height="17.2" fill="#3f6fc0" stroke="#6fa3e6" stroke-width="1.2"/><path d="M2790 177.2 L2808.6 198.4" stroke="#d6d6d6" stroke-width="3" fill="none" stroke-linecap="round" stroke-linejoin="round"/><path d="M200.4 290.4 L217.6 307.6 M217.6 290.4 L200.4 307.6" stroke="#565656" stroke-width="4" fill="none" stroke-linecap="round" stroke-linejoin="round"/><path d="M256 299.6 L264.6 308 L280.6 291" fill="none" stroke="#565656" stroke-width="4.4" stroke-linejoin="miter"/></svg>
<div class="a" style="left:44px;top:374px;width:2798px;height:1028px;background:#fff;"></div>
<div class="a" style="left:44px;top:436px;width:2798px;height:2px;background:#d2d2d2;"></div>
<div class="a" style="left:44px;top:466px;width:2798px;height:2px;background:#d2d2d2;"></div>
<div class="a" style="left:44px;top:496px;width:2798px;height:2px;background:#d2d2d2;"></div>
<div class="a" style="left:44px;top:526px;width:2798px;height:2px;background:#d2d2d2;"></div>
<div class="a" style="left:44px;top:556px;width:2798px;height:2px;background:#d2d2d2;"></div>
<div class="a" style="left:44px;top:586px;width:2798px;height:2px;background:#d2d2d2;"></div>
<div class="a" style="left:44px;top:616px;width:2798px;height:2px;background:#d2d2d2;"></div>
<div class="a" style="left:44px;top:646px;width:2798px;height:2px;background:#d2d2d2;"></div>
<div class="a" style="left:44px;top:676px;width:2798px;height:2px;background:#d2d2d2;"></div>
<div class="a" style="left:44px;top:706px;width:2798px;height:2px;background:#d2d2d2;"></div>
<div class="a" style="left:44px;top:736px;width:2798px;height:2px;background:#d2d2d2;"></div>
<div class="a" style="left:44px;top:766px;width:2798px;height:2px;background:#d2d2d2;"></div>
<div class="a" style="left:44px;top:796px;width:2798px;height:2px;background:#d2d2d2;"></div>
<div class="a" style="left:44px;top:826px;width:2798px;height:2px;background:#d2d2d2;"></div>
<div class="a" style="left:44px;top:856px;width:2798px;height:2px;background:#d2d2d2;"></div>
<div class="a" style="left:44px;top:886px;width:2798px;height:2px;background:#d2d2d2;"></div>
<div class="a" style="left:44px;top:916px;width:2798px;height:2px;background:#d2d2d2;"></div>
<div class="a" style="left:44px;top:946px;width:2798px;height:2px;background:#d2d2d2;"></div>
<div class="a" style="left:44px;top:976px;width:2798px;height:2px;background:#d2d2d2;"></div>
<div class="a" style="left:44px;top:1006px;width:2798px;height:2px;background:#d2d2d2;"></div>
<div class="a" style="left:44px;top:1036px;width:2798px;height:2px;background:#d2d2d2;"></div>
<div class="a" style="left:44px;top:1066px;width:2798px;height:2px;background:#d2d2d2;"></div>
<div class="a" style="left:44px;top:1096px;width:2798px;height:2px;background:#d2d2d2;"></div>
<div class="a" style="left:44px;top:1126px;width:2798px;height:2px;background:#d2d2d2;"></div>
<div class="a" style="left:44px;top:1156px;width:2798px;height:2px;background:#d2d2d2;"></div>
<div class="a" style="left:44px;top:1186px;width:2798px;height:2px;background:#d2d2d2;"></div>
<div class="a" style="left:44px;top:1216px;width:2798px;height:2px;background:#d2d2d2;"></div>
<div class="a" style="left:44px;top:1246px;width:2798px;height:2px;background:#d2d2d2;"></div>
<div class="a" style="left:44px;top:1276px;width:2798px;height:2px;background:#d2d2d2;"></div>
<div class="a" style="left:44px;top:1306px;width:2798px;height:2px;background:#d2d2d2;"></div>
<div class="a" style="left:44px;top:1336px;width:2798px;height:2px;background:#d2d2d2;"></div>
<div class="a" style="left:44px;top:1366px;width:2798px;height:2px;background:#d2d2d2;"></div>
<div class="a" style="left:44px;top:1396px;width:2798px;height:2px;background:#d2d2d2;"></div>
<div class="a" style="left:44px;top:1426px;width:2798px;height:2px;background:#d2d2d2;"></div>
<div class="a" style="left:42px;top:374px;width:2px;height:1028px;background:#c4c4c4;"></div>
<div class="a" style="left:282px;top:374px;width:2px;height:1028px;background:#d2d2d2;"></div>
<div class="a" style="left:646px;top:374px;width:2px;height:1028px;background:#d2d2d2;"></div>
<div class="a" style="left:790px;top:374px;width:2px;height:1028px;background:#d2d2d2;"></div>
<div class="a" style="left:898px;top:374px;width:2px;height:1028px;background:#d2d2d2;"></div>
<div class="a" style="left:1042px;top:374px;width:2px;height:1028px;background:#d2d2d2;"></div>
<div class="a" style="left:1196px;top:374px;width:2px;height:1028px;background:#d2d2d2;"></div>
<div class="a" style="left:1324px;top:374px;width:2px;height:1028px;background:#d2d2d2;"></div>
<div class="a" style="left:1456px;top:374px;width:2px;height:1028px;background:#d2d2d2;"></div>
<div class="a" style="left:1592px;top:374px;width:2px;height:1028px;background:#d2d2d2;"></div>
<div class="a" style="left:1720px;top:374px;width:2px;height:1028px;background:#d2d2d2;"></div>
<div class="a" style="left:1836px;top:374px;width:2px;height:1028px;background:#d2d2d2;"></div>
<div class="a" style="left:1966px;top:374px;width:2px;height:1028px;background:#d2d2d2;"></div>
<div class="a" style="left:2102px;top:374px;width:2px;height:1028px;background:#d2d2d2;"></div>
<div class="a" style="left:2268px;top:374px;width:2px;height:1028px;background:#d2d2d2;"></div>
<div class="a" style="left:2442px;top:374px;width:2px;height:1028px;background:#d2d2d2;"></div>
<div class="a" style="left:2628px;top:374px;width:2px;height:1028px;background:#d2d2d2;"></div>
<div class="a" style="left:2780px;top:374px;width:2px;height:1028px;background:#d2d2d2;"></div>
<div class="a" style="left:1042px;top:374px;width:284px;height:1028px;background:#e6efdf;"></div>
<div class="a" style="left:1456px;top:374px;width:138px;height:1028px;background:#e6efdf;"></div>
<div class="a" style="left:0px;top:330px;width:2842px;height:42px;background:#161616;"></div>
<div class="a" style="left:0px;top:372px;width:2842px;height:2px;background:#aaaaaa;"></div>
<div class="a" style="left:42px;top:330px;width:2px;height:42px;background:#c4c4c4;"></div>
<div class="a" style="left:2782px;top:330px;width:60px;height:42px;background:#595959;"></div>
<div class="a" style="left:282px;top:330px;width:2px;height:42px;background:#6e6e6e;"></div>
<div class="t " style="left:163.0px;top:339.6px;font-size:18.6px;line-height:24px;color:#fff;font-weight:bold;transform:translateX(-50%);">A</div>
<div class="a" style="left:646px;top:330px;width:2px;height:42px;background:#6e6e6e;"></div>
<div class="t " style="left:465.0px;top:339.6px;font-size:18.6px;line-height:24px;color:#fff;font-weight:bold;transform:translateX(-50%);">B</div>
<div class="a" style="left:790px;top:330px;width:2px;height:42px;background:#6e6e6e;"></div>
<div class="t " style="left:719.0px;top:339.6px;font-size:18.6px;line-height:24px;color:#fff;font-weight:bold;transform:translateX(-50%);">C</div>
<div class="a" style="left:898px;top:330px;width:2px;height:42px;background:#6e6e6e;"></div>
<div class="t " style="left:845.0px;top:339.6px;font-size:18.6px;line-height:24px;color:#fff;font-weight:bold;transform:translateX(-50%);">D</div>
<div class="a" style="left:1042px;top:330px;width:2px;height:42px;background:#6e6e6e;"></div>
<div class="t " style="left:971.0px;top:339.6px;font-size:18.6px;line-height:24px;color:#fff;font-weight:bold;transform:translateX(-50%);">E</div>
<div class="a" style="left:1196px;top:330px;width:2px;height:42px;background:#6e6e6e;"></div>
<div class="t " style="left:1120.0px;top:339.6px;font-size:18.6px;line-height:24px;color:#fff;font-weight:bold;transform:translateX(-50%);">F</div>
<div class="a" style="left:1324px;top:330px;width:2px;height:42px;background:#6e6e6e;"></div>
<div class="t " style="left:1261.0px;top:339.6px;font-size:18.6px;line-height:24px;color:#fff;font-weight:bold;transform:translateX(-50%);">G</div>
<div class="a" style="left:1456px;top:330px;width:2px;height:42px;background:#6e6e6e;"></div>
<div class="t " style="left:1391.0px;top:339.6px;font-size:18.6px;line-height:24px;color:#fff;font-weight:bold;transform:translateX(-50%);">H</div>
<div class="a" style="left:1592px;top:330px;width:2px;height:42px;background:#6e6e6e;"></div>
<div class="t " style="left:1525.0px;top:339.6px;font-size:18.6px;line-height:24px;color:#fff;font-weight:bold;transform:translateX(-50%);">I</div>
<div class="a" style="left:1720px;top:330px;width:2px;height:42px;background:#6e6e6e;"></div>
<div class="t " style="left:1657.0px;top:339.6px;font-size:18.6px;line-height:24px;color:#fff;font-weight:bold;transform:translateX(-50%);">J</div>
<div class="a" style="left:1836px;top:330px;width:2px;height:42px;background:#6e6e6e;"></div>
<div class="t " style="left:1779.0px;top:339.6px;font-size:18.6px;line-height:24px;color:#fff;font-weight:bold;transform:translateX(-50%);">K</div>
<div class="a" style="left:1966px;top:330px;width:2px;height:42px;background:#6e6e6e;"></div>
<div class="t " style="left:1902.0px;top:339.6px;font-size:18.6px;line-height:24px;color:#fff;font-weight:bold;transform:translateX(-50%);">L</div>
<div class="a" style="left:2102px;top:330px;width:2px;height:42px;background:#6e6e6e;"></div>
<div class="t " style="left:2035.0px;top:339.6px;font-size:18.6px;line-height:24px;color:#fff;font-weight:bold;transform:translateX(-50%);">M</div>
<div class="a" style="left:2268px;top:330px;width:2px;height:42px;background:#6e6e6e;"></div>
<div class="t " style="left:2186.0px;top:339.6px;font-size:18.6px;line-height:24px;color:#fff;font-weight:bold;transform:translateX(-50%);">N</div>
<div class="a" style="left:2442px;top:330px;width:2px;height:42px;background:#6e6e6e;"></div>
<div class="t " style="left:2356.0px;top:339.6px;font-size:18.6px;line-height:24px;color:#fff;font-weight:bold;transform:translateX(-50%);">O</div>
<div class="a" style="left:2628px;top:330px;width:2px;height:42px;background:#6e6e6e;"></div>
<div class="t " style="left:2536.0px;top:339.6px;font-size:18.6px;line-height:24px;color:#fff;font-weight:bold;transform:translateX(-50%);">P</div>
<div class="a" style="left:2780px;top:330px;width:2px;height:42px;background:#6e6e6e;"></div>
<div class="t " style="left:2705.0px;top:339.6px;font-size:18.6px;line-height:24px;color:#fff;font-weight:bold;transform:translateX(-50%);">Q</div>
<div class="t " style="left:2833.0px;top:339.6px;font-size:18.6px;line-height:24px;color:#fff;font-weight:bold;transform:translateX(-50%);">R</div>
<div class="a" style="left:8px;top:338px;width:0;height:0;border-left:30px solid transparent;border-bottom:30px solid #595959"></div>
<div class="a" style="left:0px;top:374px;width:42px;height:1028px;background:#161616;"></div>
<div class="a" style="left:0px;top:374px;width:42px;height:62px;background:#595959;"></div>
<div class="a" style="left:40px;top:374px;width:4px;height:64px;background:#4b7b54;"></div>
<div class="a" style="left:0px;top:435px;width:44px;height:4px;background:#4b7b54;"></div>
<div class="t " style="left:20.0px;top:410.1px;font-size:20px;line-height:26px;color:#fff;font-weight:bold;transform:translateX(-50%);">1</div>
<div class="a" style="left:0px;top:466px;width:42px;height:2px;background:#6a6a6a;"></div>
<div class="t " style="left:20.0px;top:440.1px;font-size:20px;line-height:26px;color:#fff;font-weight:bold;transform:translateX(-50%);">3</div>
<div class="a" style="left:0px;top:496px;width:42px;height:2px;background:#6a6a6a;"></div>
<div class="t " style="left:20.0px;top:470.1px;font-size:20px;line-height:26px;color:#fff;font-weight:bold;transform:translateX(-50%);">4</div>
<div class="a" style="left:0px;top:526px;width:42px;height:2px;background:#6a6a6a;"></div>
<div class="t " style="left:20.0px;top:500.1px;font-size:20px;line-height:26px;color:#fff;font-weight:bold;transform:translateX(-50%);">5</div>
<div class="a" style="left:0px;top:556px;width:42px;height:2px;background:#6a6a6a;"></div>
<div class="t " style="left:20.0px;top:530.1px;font-size:20px;line-height:26px;color:#fff;font-weight:bold;transform:translateX(-50%);">6</div>
<div class="a" style="left:0px;top:586px;width:42px;height:2px;background:#6a6a6a;"></div>
<div class="t " style="left:20.0px;top:560.1px;font-size:20px;line-height:26px;color:#fff;font-weight:bold;transform:translateX(-50%);">7</div>
<div class="a" style="left:0px;top:616px;width:42px;height:2px;background:#6a6a6a;"></div>
<div class="t " style="left:20.0px;top:590.1px;font-size:20px;line-height:26px;color:#fff;font-weight:bold;transform:translateX(-50%);">8</div>
<div class="a" style="left:0px;top:646px;width:42px;height:2px;background:#6a6a6a;"></div>
<div class="t " style="left:20.0px;top:620.1px;font-size:20px;line-height:26px;color:#fff;font-weight:bold;transform:translateX(-50%);">9</div>
<div class="a" style="left:0px;top:676px;width:42px;height:2px;background:#6a6a6a;"></div>
<div class="t " style="left:20.0px;top:650.1px;font-size:20px;line-height:26px;color:#fff;font-weight:bold;letter-spacing:0.75px;transform:translateX(-50%);">10</div>
<div class="a" style="left:0px;top:706px;width:42px;height:2px;background:#6a6a6a;"></div>
<div class="t " style="left:20.0px;top:680.1px;font-size:20px;line-height:26px;color:#fff;font-weight:bold;letter-spacing:1.86px;transform:translateX(-50%);">11</div>
<div class="a" style="left:0px;top:736px;width:42px;height:2px;background:#6a6a6a;"></div>
<div class="t " style="left:20.0px;top:710.1px;font-size:20px;line-height:26px;color:#fff;font-weight:bold;letter-spacing:0.75px;transform:translateX(-50%);">12</div>
<div class="a" style="left:0px;top:766px;width:42px;height:2px;background:#6a6a6a;"></div>
<div class="t " style="left:20.0px;top:740.1px;font-size:20px;line-height:26px;color:#fff;font-weight:bold;letter-spacing:0.75px;transform:translateX(-50%);">13</div>
<div class="a" style="left:0px;top:796px;width:42px;height:2px;background:#6a6a6a;"></div>
<div class="t " style="left:20.0px;top:770.1px;font-size:20px;line-height:26px;color:#fff;font-weight:bold;letter-spacing:0.75px;transform:translateX(-50%);">14</div>
<div class="a" style="left:0px;top:826px;width:42px;height:2px;background:#6a6a6a;"></div>
<div class="t " style="left:20.0px;top:800.1px;font-size:20px;line-height:26px;color:#fff;font-weight:bold;letter-spacing:0.75px;transform:translateX(-50%);">15</div>
<div class="a" style="left:0px;top:856px;width:42px;height:2px;background:#6a6a6a;"></div>
<div class="t " style="left:20.0px;top:830.1px;font-size:20px;line-height:26px;color:#fff;font-weight:bold;letter-spacing:0.75px;transform:translateX(-50%);">16</div>
<div class="a" style="left:0px;top:886px;width:42px;height:2px;background:#6a6a6a;"></div>
<div class="t " style="left:20.0px;top:860.1px;font-size:20px;line-height:26px;color:#fff;font-weight:bold;letter-spacing:0.75px;transform:translateX(-50%);">17</div>
<div class="a" style="left:0px;top:916px;width:42px;height:2px;background:#6a6a6a;"></div>
<div class="t " style="left:20.0px;top:890.1px;font-size:20px;line-height:26px;color:#fff;font-weight:bold;letter-spacing:0.75px;transform:translateX(-50%);">18</div>
<div class="a" style="left:0px;top:946px;width:42px;height:2px;background:#6a6a6a;"></div>
<div class="t " style="left:20.0px;top:920.1px;font-size:20px;line-height:26px;color:#fff;font-weight:bold;letter-spacing:0.75px;transform:translateX(-50%);">19</div>
<div class="a" style="left:0px;top:976px;width:42px;height:2px;background:#6a6a6a;"></div>
<div class="t " style="left:20.0px;top:950.1px;font-size:20px;line-height:26px;color:#fff;font-weight:bold;letter-spacing:0.75px;transform:translateX(-50%);">20</div>
<div class="a" style="left:0px;top:1006px;width:42px;height:2px;background:#6a6a6a;"></div>
<div class="t " style="left:20.0px;top:980.1px;font-size:20px;line-height:26px;color:#fff;font-weight:bold;letter-spacing:0.75px;transform:translateX(-50%);">21</div>
<div class="a" style="left:0px;top:1036px;width:42px;height:2px;background:#6a6a6a;"></div>
<div class="t " style="left:20.0px;top:1010.1px;font-size:20px;line-height:26px;color:#fff;font-weight:bold;letter-spacing:0.75px;transform:translateX(-50%);">22</div>
<div class="a" style="left:0px;top:1066px;width:42px;height:2px;background:#6a6a6a;"></div>
<div class="t " style="left:20.0px;top:1040.1px;font-size:20px;line-height:26px;color:#fff;font-weight:bold;letter-spacing:0.75px;transform:translateX(-50%);">23</div>
<div class="a" style="left:0px;top:1096px;width:42px;height:2px;background:#6a6a6a;"></div>
<div class="t " style="left:20.0px;top:1070.1px;font-size:20px;line-height:26px;color:#fff;font-weight:bold;letter-spacing:0.75px;transform:translateX(-50%);">24</div>
<div class="a" style="left:0px;top:1126px;width:42px;height:2px;background:#6a6a6a;"></div>
<div class="t " style="left:20.0px;top:1100.1px;font-size:20px;line-height:26px;color:#fff;font-weight:bold;letter-spacing:0.75px;transform:translateX(-50%);">25</div>
<div class="a" style="left:0px;top:1156px;width:42px;height:2px;background:#6a6a6a;"></div>
<div class="t " style="left:20.0px;top:1130.1px;font-size:20px;line-height:26px;color:#fff;font-weight:bold;letter-spacing:0.75px;transform:translateX(-50%);">26</div>
<div class="a" style="left:0px;top:1186px;width:42px;height:2px;background:#6a6a6a;"></div>
<div class="t " style="left:20.0px;top:1160.1px;font-size:20px;line-height:26px;color:#fff;font-weight:bold;letter-spacing:0.75px;transform:translateX(-50%);">27</div>
<div class="a" style="left:0px;top:1216px;width:42px;height:2px;background:#6a6a6a;"></div>
<div class="t " style="left:20.0px;top:1190.1px;font-size:20px;line-height:26px;color:#fff;font-weight:bold;letter-spacing:0.75px;transform:translateX(-50%);">28</div>
<div class="a" style="left:0px;top:1246px;width:42px;height:2px;background:#6a6a6a;"></div>
<div class="t " style="left:20.0px;top:1220.1px;font-size:20px;line-height:26px;color:#fff;font-weight:bold;letter-spacing:0.75px;transform:translateX(-50%);">29</div>
<div class="a" style="left:0px;top:1276px;width:42px;height:2px;background:#6a6a6a;"></div>
<div class="t " style="left:20.0px;top:1250.1px;font-size:20px;line-height:26px;color:#fff;font-weight:bold;letter-spacing:0.75px;transform:translateX(-50%);">30</div>
<div class="a" style="left:0px;top:1306px;width:42px;height:2px;background:#6a6a6a;"></div>
<div class="t " style="left:20.0px;top:1280.1px;font-size:20px;line-height:26px;color:#fff;font-weight:bold;letter-spacing:0.75px;transform:translateX(-50%);">31</div>
<div class="a" style="left:0px;top:1336px;width:42px;height:2px;background:#6a6a6a;"></div>
<div class="t " style="left:20.0px;top:1310.1px;font-size:20px;line-height:26px;color:#fff;font-weight:bold;letter-spacing:0.75px;transform:translateX(-50%);">32</div>
<div class="a" style="left:0px;top:1366px;width:42px;height:2px;background:#6a6a6a;"></div>
<div class="t " style="left:20.0px;top:1340.1px;font-size:20px;line-height:26px;color:#fff;font-weight:bold;letter-spacing:0.75px;transform:translateX(-50%);">33</div>
<div class="a" style="left:0px;top:1396px;width:42px;height:2px;background:#6a6a6a;"></div>
<div class="t " style="left:20.0px;top:1370.1px;font-size:20px;line-height:26px;color:#fff;font-weight:bold;letter-spacing:0.75px;transform:translateX(-50%);">34</div>
<div class="a" style="left:0px;top:1426px;width:42px;height:2px;background:#6a6a6a;"></div>
<div class="a" style="left:2779px;top:372px;width:80px;height:68px;box-sizing:border-box;border:4px solid #41744b;background:#fff"></div>
<div class="c tx" style="left:48px;top:408px;letter-spacing:0.35px">Product ID</div>
<div class="c tx" style="left:288px;top:408px;letter-spacing:0.35px">Product name</div>
<div class="c tx" style="left:652px;top:408px;letter-spacing:0.53px">Product price</div>
<div class="c tx" style="left:796px;top:408px;letter-spacing:0.27px">Stock</div>
<div class="c tx" style="left:904px;top:378px;letter-spacing:0.61px">Products</div>
<div class="c tx" style="left:904px;top:408px;letter-spacing:0.32px">status</div>
<div class="c tx" style="left:1048px;top:378px;letter-spacing:0.16px">Add to open</div>
<div class="c tx" style="left:1048px;top:408px;letter-spacing:0.77px">collaboration?</div>
<div class="c tx" style="left:1202px;top:378px;letter-spacing:0.13px">Commission</div>
<div class="c tx" style="left:1202px;top:408px;letter-spacing:0.86px">rate</div>
<div class="c tx" style="left:1330px;top:378px;letter-spacing:-0.83px">Est.</div>
<div class="c tx" style="left:1330px;top:408px;letter-spacing:0.41px">commission</div>
<div class="c tx" style="left:1462px;top:378px;letter-spacing:0.39px">Approve</div>
<div class="c tx" style="left:1462px;top:408px;letter-spacing:0.38px">creators</div>
<div class="c tx" style="left:1598px;top:378px;letter-spacing:0.24px">Creator</div>
<div class="c tx" style="left:1598px;top:408px;letter-spacing:-0.23px">showcase</div>
<div class="c tx" style="left:1726px;top:378px;letter-spacing:0.24px">Creator</div>
<div class="c tx" style="left:1726px;top:408px;letter-spacing:0.67px">post</div>
<div class="c tx" style="left:1842px;top:378px;letter-spacing:-0.16px">Offer free</div>
<div class="c tx" style="left:1842px;top:408px;letter-spacing:-0.30px">samples</div>
<div class="c tx" style="left:1972px;top:378px;letter-spacing:-0.22px">Sample</div>
<div class="c tx" style="left:1972px;top:408px;letter-spacing:1.18px">quantity</div>
<div class="c tx" style="left:2108px;top:378px;letter-spacing:1.26px">Minimum</div>
<div class="c tx" style="left:2108px;top:408px;letter-spacing:0.72px">follower count</div>
<div class="c tx" style="left:2274px;top:378px;letter-spacing:0.62px">Minimum 30-day</div>
<div class="c tx" style="left:2274px;top:408px;letter-spacing:-0.32px">sales volume (£)</div>
<div class="c tx" style="left:2448px;top:378px;letter-spacing:-0.33px">average video views</div>
<div class="c tx" style="left:2448px;top:408px;letter-spacing:0.14px">per video</div>
<div class="c tx" style="left:2634px;top:378px;letter-spacing:0.24px">Creator</div>
<div class="c tx" style="left:2634px;top:408px;letter-spacing:0.80px">fulfillment rate</div>
<div class="c nm" style="left:48px;top:438px">1729382626105788575</div>
<div class="g" style="left:44px;top:438px"></div>
<div class="c nm" style="left:652px;top:438px">£111.00</div>
<div class="c nm" style="left:796px;top:438px">11</div>
<div class="g" style="left:792px;top:438px"></div>
<div class="c tx" style="left:904px;top:438px;letter-spacing:0.19px">Unavailable</div>
<div class="c tx" style="left:1048px;top:438px;transform:scaleX(0.765);transform-origin:0 50%">YES</div>
<div class="c nm" style="left:1202px;top:438px">100</div>
<div class="g" style="left:1198px;top:438px"></div>
<div class="c nm" style="left:1330px;top:438px">£1.11</div>
<div class="c tx" style="left:1462px;top:438px;transform:scaleX(0.94);transform-origin:0 50%">NO</div>
<div class="c nm" style="left:1598px;top:438px">0</div>
<div class="g" style="left:1594px;top:438px"></div>
<div class="c nm" style="left:1726px;top:438px">0</div>
<div class="g" style="left:1722px;top:438px"></div>
<div class="c tx" style="left:1842px;top:438px;transform:scaleX(0.94);transform-origin:0 50%">NO</div>
<div class="c nm" style="left:48px;top:468px">1729392109429557407</div>
<div class="g" style="left:44px;top:468px"></div>
<div class="c nm" style="left:652px;top:468px">£12.00</div>
<div class="c nm" style="left:796px;top:468px">42</div>
<div class="g" style="left:792px;top:468px"></div>
<div class="c tx" style="left:904px;top:468px;letter-spacing:0.19px">Unavailable</div>
<div class="c tx" style="left:1048px;top:468px;transform:scaleX(0.765);transform-origin:0 50%">YES</div>
<div class="c nm" style="left:1202px;top:468px">100</div>
<div class="g" style="left:1198px;top:468px"></div>
<div class="c nm" style="left:1330px;top:468px">£0.12</div>
<div class="c tx" style="left:1462px;top:468px;transform:scaleX(0.94);transform-origin:0 50%">NO</div>
<div class="c nm" style="left:1598px;top:468px">0</div>
<div class="g" style="left:1594px;top:468px"></div>
<div class="c nm" style="left:1726px;top:468px">0</div>
<div class="g" style="left:1722px;top:468px"></div>
<div class="c tx" style="left:1842px;top:468px;transform:scaleX(0.94);transform-origin:0 50%">NO</div>
<div class="c nm" style="left:48px;top:498px">1729392116290521247</div>
<div class="g" style="left:44px;top:498px"></div>
<div class="c nm" style="left:652px;top:498px">£1.00</div>
<div class="c nm" style="left:796px;top:498px">63</div>
<div class="g" style="left:792px;top:498px"></div>
<div class="c tx" style="left:904px;top:498px;letter-spacing:0.19px">Unavailable</div>
<div class="c tx" style="left:1048px;top:498px;transform:scaleX(0.765);transform-origin:0 50%">YES</div>
<div class="c nm" style="left:1202px;top:498px">100</div>
<div class="g" style="left:1198px;top:498px"></div>
<div class="c nm" style="left:1330px;top:498px">£0.01</div>
<div class="c tx" style="left:1462px;top:498px;transform:scaleX(0.94);transform-origin:0 50%">NO</div>
<div class="c nm" style="left:1598px;top:498px">0</div>
<div class="g" style="left:1594px;top:498px"></div>
<div class="c nm" style="left:1726px;top:498px">0</div>
<div class="g" style="left:1722px;top:498px"></div>
<div class="c tx" style="left:1842px;top:498px;transform:scaleX(0.94);transform-origin:0 50%">NO</div>
<div class="c nm" style="left:48px;top:528px">1729397580556242079</div>
<div class="g" style="left:44px;top:528px"></div>
<div class="c nm" style="left:652px;top:528px">£20.00</div>
<div class="c nm" style="left:796px;top:528px">100</div>
<div class="g" style="left:792px;top:528px"></div>
<div class="c tx" style="left:904px;top:528px;letter-spacing:0.19px">Unavailable</div>
<div class="c tx" style="left:1048px;top:528px;transform:scaleX(0.765);transform-origin:0 50%">YES</div>
<div class="c nm" style="left:1202px;top:528px">2000</div>
<div class="g" style="left:1198px;top:528px"></div>
<div class="c nm" style="left:1330px;top:528px">£4.00</div>
<div class="c tx" style="left:1462px;top:528px;transform:scaleX(0.94);transform-origin:0 50%">NO</div>
<div class="c nm" style="left:1598px;top:528px">1</div>
<div class="g" style="left:1594px;top:528px"></div>
<div class="c nm" style="left:1726px;top:528px">0</div>
<div class="g" style="left:1722px;top:528px"></div>
<div class="c tx" style="left:1842px;top:528px;transform:scaleX(0.94);transform-origin:0 50%">NO</div>
<div class="c nm" style="left:48px;top:558px">1729397880617208991</div>
<div class="g" style="left:44px;top:558px"></div>
<div class="c nm" style="left:652px;top:558px">£0.10</div>
<div class="c nm" style="left:796px;top:558px">700</div>
<div class="g" style="left:792px;top:558px"></div>
<div class="c tx" style="left:904px;top:558px;letter-spacing:0.19px">Unavailable</div>
<div class="c tx" style="left:1048px;top:558px;transform:scaleX(0.94);transform-origin:0 50%">NO</div>
<div class="c tx" style="left:1462px;top:558px;transform:scaleX(0.94);transform-origin:0 50%">NO</div>
<div class="c tx" style="left:1842px;top:558px;transform:scaleX(0.94);transform-origin:0 50%">NO</div>
<div class="c nm" style="left:48px;top:588px">1729398522943081631</div>
<div class="g" style="left:44px;top:588px"></div>
<div class="c nm" style="left:652px;top:588px">£549.31</div>
<div class="c nm" style="left:796px;top:588px">2232</div>
<div class="g" style="left:792px;top:588px"></div>
<div class="c tx" style="left:904px;top:588px;letter-spacing:0.19px">Unavailable</div>
<div class="c tx" style="left:1048px;top:588px;transform:scaleX(0.94);transform-origin:0 50%">NO</div>
<div class="c tx" style="left:1462px;top:588px;transform:scaleX(0.94);transform-origin:0 50%">NO</div>
<div class="c tx" style="left:1842px;top:588px;transform:scaleX(0.94);transform-origin:0 50%">NO</div>
<div class="c nm" style="left:48px;top:618px">1729398523822967967</div>
<div class="g" style="left:44px;top:618px"></div>
<div class="c nm" style="left:652px;top:618px">£627.80</div>
<div class="c nm" style="left:796px;top:618px">2232</div>
<div class="g" style="left:792px;top:618px"></div>
<div class="c tx" style="left:904px;top:618px;letter-spacing:0.25px">Available</div>
<div class="c tx" style="left:1048px;top:618px;transform:scaleX(0.765);transform-origin:0 50%">YES</div>
<div class="c nm" style="left:1202px;top:618px">1500</div>
<div class="g" style="left:1198px;top:618px"></div>
<div class="c nm" style="left:1330px;top:618px">£94.17</div>
<div class="c tx" style="left:1462px;top:618px;transform:scaleX(0.94);transform-origin:0 50%">NO</div>
<div class="c nm" style="left:1598px;top:618px">1</div>
<div class="g" style="left:1594px;top:618px"></div>
<div class="c nm" style="left:1726px;top:618px">0</div>
<div class="g" style="left:1722px;top:618px"></div>
<div class="c tx" style="left:1842px;top:618px;transform:scaleX(0.94);transform-origin:0 50%">NO</div>
<div class="c nm" style="left:48px;top:648px">1729398552845257887</div>
<div class="g" style="left:44px;top:648px"></div>
<div class="c nm" style="left:652px;top:648px">£549.31</div>
<div class="c nm" style="left:796px;top:648px">2232</div>
<div class="g" style="left:792px;top:648px"></div>
<div class="c tx" style="left:904px;top:648px;letter-spacing:0.19px">Unavailable</div>
<div class="c tx" style="left:1048px;top:648px;transform:scaleX(0.94);transform-origin:0 50%">NO</div>
<div class="c tx" style="left:1462px;top:648px;transform:scaleX(0.94);transform-origin:0 50%">NO</div>
<div class="c tx" style="left:1842px;top:648px;transform:scaleX(0.94);transform-origin:0 50%">NO</div>
<div class="c nm" style="left:48px;top:678px">1729398552977378463</div>
<div class="g" style="left:44px;top:678px"></div>
<div class="c nm" style="left:652px;top:678px">£1.00</div>
<div class="c nm" style="left:796px;top:678px">200</div>
<div class="g" style="left:792px;top:678px"></div>
<div class="c tx" style="left:904px;top:678px;letter-spacing:0.25px">Available</div>
<div class="c tx" style="left:1048px;top:678px;transform:scaleX(0.765);transform-origin:0 50%">YES</div>
<div class="c nm" style="left:1202px;top:678px">1500</div>
<div class="g" style="left:1198px;top:678px"></div>
<div class="c nm" style="left:1330px;top:678px">£0.15</div>
<div class="c tx" style="left:1462px;top:678px;transform:scaleX(0.94);transform-origin:0 50%">NO</div>
<div class="c nm" style="left:1598px;top:678px">2</div>
<div class="g" style="left:1594px;top:678px"></div>
<div class="c nm" style="left:1726px;top:678px">0</div>
<div class="g" style="left:1722px;top:678px"></div>
<div class="c tx" style="left:1842px;top:678px;transform:scaleX(0.765);transform-origin:0 50%">YES</div>
<div class="c nm" style="left:1972px;top:678px">100</div>
<div class="g" style="left:1968px;top:678px"></div>
<div class="c nm" style="left:2108px;top:678px">0</div>
<div class="g" style="left:2104px;top:678px"></div>
<div class="c nm" style="left:2270px;width:169px;top:678px;text-align:right">0</div>
<div class="c nm" style="left:2448px;top:678px">0</div>
<div class="g" style="left:2444px;top:678px"></div>
<div class="c tx" style="left:2634px;top:678px;letter-spacing:0.58px">All</div>
<div class="c nm" style="left:48px;top:708px">1729399826116938911</div>
<div class="g" style="left:44px;top:708px"></div>
<div class="c nm" style="left:652px;top:708px">£2.00</div>
<div class="c nm" style="left:796px;top:708px">115</div>
<div class="g" style="left:792px;top:708px"></div>
<div class="c tx" style="left:904px;top:708px;letter-spacing:0.19px">Unavailable</div>
<div class="c tx" style="left:1048px;top:708px;transform:scaleX(0.765);transform-origin:0 50%">YES</div>
<div class="c nm" style="left:1202px;top:708px">1500</div>
<div class="g" style="left:1198px;top:708px"></div>
<div class="c nm" style="left:1330px;top:708px">£0.30</div>
<div class="c tx" style="left:1462px;top:708px;transform:scaleX(0.94);transform-origin:0 50%">NO</div>
<div class="c nm" style="left:1598px;top:708px">6</div>
<div class="g" style="left:1594px;top:708px"></div>
<div class="c nm" style="left:1726px;top:708px">0</div>
<div class="g" style="left:1722px;top:708px"></div>
<div class="c tx" style="left:1842px;top:708px;transform:scaleX(0.94);transform-origin:0 50%">NO</div>
<div class="c nm" style="left:48px;top:738px">1729399845379476639</div>
<div class="g" style="left:44px;top:738px"></div>
<div class="c nm" style="left:652px;top:738px">£0.01</div>
<div class="c nm" style="left:796px;top:738px">1000</div>
<div class="g" style="left:792px;top:738px"></div>
<div class="c tx" style="left:904px;top:738px;letter-spacing:0.19px">Unavailable</div>
<div class="c tx" style="left:1048px;top:738px;transform:scaleX(0.765);transform-origin:0 50%">YES</div>
<div class="c nm" style="left:1202px;top:738px">1100</div>
<div class="g" style="left:1198px;top:738px"></div>
<div class="c nm" style="left:1330px;top:738px">£0.00</div>
<div class="c tx" style="left:1462px;top:738px;transform:scaleX(0.94);transform-origin:0 50%">NO</div>
<div class="c nm" style="left:1598px;top:738px">2</div>
<div class="g" style="left:1594px;top:738px"></div>
<div class="c nm" style="left:1726px;top:738px">0</div>
<div class="g" style="left:1722px;top:738px"></div>
<div class="c tx" style="left:1842px;top:738px;transform:scaleX(0.94);transform-origin:0 50%">NO</div>
<div class="c nm" style="left:48px;top:768px">1729399872950340767</div>
<div class="g" style="left:44px;top:768px"></div>
<div class="c nm" style="left:652px;top:768px">£2.00</div>
<div class="c nm" style="left:796px;top:768px">2466</div>
<div class="g" style="left:792px;top:768px"></div>
<div class="c tx" style="left:904px;top:768px;letter-spacing:0.19px">Unavailable</div>
<div class="c tx" style="left:1048px;top:768px;transform:scaleX(0.765);transform-origin:0 50%">YES</div>
<div class="c nm" style="left:1202px;top:768px">1300</div>
<div class="g" style="left:1198px;top:768px"></div>
<div class="c nm" style="left:1330px;top:768px">£0.26</div>
<div class="c tx" style="left:1462px;top:768px;transform:scaleX(0.94);transform-origin:0 50%">NO</div>
<div class="c nm" style="left:1598px;top:768px">8</div>
<div class="g" style="left:1594px;top:768px"></div>
<div class="c nm" style="left:1726px;top:768px">0</div>
<div class="g" style="left:1722px;top:768px"></div>
<div class="c tx" style="left:1842px;top:768px;transform:scaleX(0.94);transform-origin:0 50%">NO</div>
<div class="c nm" style="left:48px;top:798px">1729399873514146975</div>
<div class="g" style="left:44px;top:798px"></div>
<div class="c nm" style="left:652px;top:798px">£2.00</div>
<div class="c nm" style="left:796px;top:798px">1233</div>
<div class="g" style="left:792px;top:798px"></div>
<div class="c tx" style="left:904px;top:798px;letter-spacing:0.19px">Unavailable</div>
<div class="c tx" style="left:1048px;top:798px;transform:scaleX(0.765);transform-origin:0 50%">YES</div>
<div class="c nm" style="left:1202px;top:798px">1100</div>
<div class="g" style="left:1198px;top:798px"></div>
<div class="c nm" style="left:1330px;top:798px">£0.22</div>
<div class="c tx" style="left:1462px;top:798px;transform:scaleX(0.94);transform-origin:0 50%">NO</div>
<div class="c nm" style="left:1598px;top:798px">5</div>
<div class="g" style="left:1594px;top:798px"></div>
<div class="c nm" style="left:1726px;top:798px">0</div>
<div class="g" style="left:1722px;top:798px"></div>
<div class="c tx" style="left:1842px;top:798px;transform:scaleX(0.94);transform-origin:0 50%">NO</div>
<div class="c nm" style="left:48px;top:828px">1729399873544359071</div>
<div class="g" style="left:44px;top:828px"></div>
<div class="c nm" style="left:652px;top:828px">£3.00</div>
<div class="c nm" style="left:796px;top:828px">1111</div>
<div class="g" style="left:792px;top:828px"></div>
<div class="c tx" style="left:904px;top:828px;letter-spacing:0.19px">Unavailable</div>
<div class="c tx" style="left:1048px;top:828px;transform:scaleX(0.765);transform-origin:0 50%">YES</div>
<div class="c nm" style="left:1202px;top:828px">1100</div>
<div class="g" style="left:1198px;top:828px"></div>
<div class="c nm" style="left:1330px;top:828px">£0.33</div>
<div class="c tx" style="left:1462px;top:828px;transform:scaleX(0.94);transform-origin:0 50%">NO</div>
<div class="c nm" style="left:1598px;top:828px">2</div>
<div class="g" style="left:1594px;top:828px"></div>
<div class="c nm" style="left:1726px;top:828px">0</div>
<div class="g" style="left:1722px;top:828px"></div>
<div class="c tx" style="left:1842px;top:828px;transform:scaleX(0.94);transform-origin:0 50%">NO</div>
<div class="c nm" style="left:48px;top:858px">1729399929769135263</div>
<div class="g" style="left:44px;top:858px"></div>
<div class="c nm" style="left:652px;top:858px">£549.31</div>
<div class="c nm" style="left:796px;top:858px">0</div>
<div class="g" style="left:792px;top:858px"></div>
<div class="c tx" style="left:904px;top:858px;letter-spacing:0.19px">Unavailable</div>
<div class="c tx" style="left:1048px;top:858px;transform:scaleX(0.765);transform-origin:0 50%">YES</div>
<div class="c nm" style="left:1202px;top:858px">1000</div>
<div class="g" style="left:1198px;top:858px"></div>
<div class="c nm" style="left:1330px;top:858px">£54.93</div>
<div class="c tx" style="left:1462px;top:858px;transform:scaleX(0.94);transform-origin:0 50%">NO</div>
<div class="c nm" style="left:1598px;top:858px">0</div>
<div class="g" style="left:1594px;top:858px"></div>
<div class="c nm" style="left:1726px;top:858px">0</div>
<div class="g" style="left:1722px;top:858px"></div>
<div class="c tx" style="left:1842px;top:858px;transform:scaleX(0.94);transform-origin:0 50%">NO</div>
<div class="c nm" style="left:48px;top:888px">1729399929790565535</div>
<div class="g" style="left:44px;top:888px"></div>
<div class="c nm" style="left:652px;top:888px">£525.77</div>
<div class="c nm" style="left:796px;top:888px">21</div>
<div class="g" style="left:792px;top:888px"></div>
<div class="c tx" style="left:904px;top:888px;letter-spacing:0.19px">Unavailable</div>
<div class="c tx" style="left:1048px;top:888px;transform:scaleX(0.765);transform-origin:0 50%">YES</div>
<div class="c nm" style="left:1202px;top:888px">1500</div>
<div class="g" style="left:1198px;top:888px"></div>
<div class="c nm" style="left:1330px;top:888px">£78.87</div>
<div class="c tx" style="left:1462px;top:888px;transform:scaleX(0.94);transform-origin:0 50%">NO</div>
<div class="c nm" style="left:1598px;top:888px">5</div>
<div class="g" style="left:1594px;top:888px"></div>
<div class="c nm" style="left:1726px;top:888px">1</div>
<div class="g" style="left:1722px;top:888px"></div>
<div class="c tx" style="left:1842px;top:888px;transform:scaleX(0.94);transform-origin:0 50%">NO</div>
<div class="c nm" style="left:48px;top:918px">1729399936697994399</div>
<div class="g" style="left:44px;top:918px"></div>
<div class="c nm" style="left:652px;top:918px">£2.00</div>
<div class="c nm" style="left:796px;top:918px">1110</div>
<div class="g" style="left:792px;top:918px"></div>
<div class="c tx" style="left:904px;top:918px;letter-spacing:0.19px">Unavailable</div>
<div class="c tx" style="left:1048px;top:918px;transform:scaleX(0.765);transform-origin:0 50%">YES</div>
<div class="c nm" style="left:1202px;top:918px">1100</div>
<div class="g" style="left:1198px;top:918px"></div>
<div class="c nm" style="left:1330px;top:918px">£0.22</div>
<div class="c tx" style="left:1462px;top:918px;transform:scaleX(0.765);transform-origin:0 50%">YES</div>
<div class="c nm" style="left:1598px;top:918px">1</div>
<div class="g" style="left:1594px;top:918px"></div>
<div class="c nm" style="left:1726px;top:918px">0</div>
<div class="g" style="left:1722px;top:918px"></div>
<div class="c tx" style="left:1842px;top:918px;transform:scaleX(0.94);transform-origin:0 50%">NO</div>
<div class="c nm" style="left:48px;top:948px">1729399976584449183</div>
<div class="g" style="left:44px;top:948px"></div>
<div class="c nm" style="left:652px;top:948px">£12.00</div>
<div class="c nm" style="left:796px;top:948px">211</div>
<div class="g" style="left:792px;top:948px"></div>
<div class="c tx" style="left:904px;top:948px;letter-spacing:0.19px">Unavailable</div>
<div class="c tx" style="left:1048px;top:948px;transform:scaleX(0.765);transform-origin:0 50%">YES</div>
<div class="c nm" style="left:1202px;top:948px">1500</div>
<div class="g" style="left:1198px;top:948px"></div>
<div class="c nm" style="left:1330px;top:948px">£1.80</div>
<div class="c tx" style="left:1462px;top:948px;transform:scaleX(0.94);transform-origin:0 50%">NO</div>
<div class="c nm" style="left:1598px;top:948px">8</div>
<div class="g" style="left:1594px;top:948px"></div>
<div class="c nm" style="left:1726px;top:948px">1</div>
<div class="g" style="left:1722px;top:948px"></div>
<div class="c tx" style="left:1842px;top:948px;transform:scaleX(0.94);transform-origin:0 50%">NO</div>
<div class="c nm" style="left:48px;top:978px">1729400010331753631</div>
<div class="g" style="left:44px;top:978px"></div>
<div class="c nm" style="left:652px;top:978px">£9.14</div>
<div class="c nm" style="left:796px;top:978px">99999</div>
<div class="g" style="left:792px;top:978px"></div>
<div class="c tx" style="left:904px;top:978px;letter-spacing:0.19px">Unavailable</div>
<div class="c tx" style="left:1048px;top:978px;transform:scaleX(0.94);transform-origin:0 50%">NO</div>
<div class="c tx" style="left:1462px;top:978px;transform:scaleX(0.94);transform-origin:0 50%">NO</div>
<div class="c tx" style="left:1842px;top:978px;transform:scaleX(0.94);transform-origin:0 50%">NO</div>
<div class="c nm" style="left:48px;top:1008px">1729400010341584031</div>
<div class="g" style="left:44px;top:1008px"></div>
<div class="c nm" style="left:652px;top:1008px">£9.14</div>
<div class="c nm" style="left:796px;top:1008px">99999</div>
<div class="g" style="left:792px;top:1008px"></div>
<div class="c tx" style="left:904px;top:1008px;letter-spacing:0.19px">Unavailable</div>
<div class="c tx" style="left:1048px;top:1008px;transform:scaleX(0.765);transform-origin:0 50%">YES</div>
<div class="c tx" style="left:1462px;top:1008px;transform:scaleX(0.94);transform-origin:0 50%">NO</div>
<div class="c tx" style="left:1842px;top:1008px;transform:scaleX(0.94);transform-origin:0 50%">NO</div>
<div class="c nm" style="left:48px;top:1038px">1729400011758144671</div>
<div class="g" style="left:44px;top:1038px"></div>
<div class="c nm" style="left:652px;top:1038px">£9.14</div>
<div class="c nm" style="left:796px;top:1038px">99999</div>
<div class="g" style="left:792px;top:1038px"></div>
<div class="c tx" style="left:904px;top:1038px;letter-spacing:0.19px">Unavailable</div>
<div class="c tx" style="left:1048px;top:1038px;transform:scaleX(0.94);transform-origin:0 50%">NO</div>
<div class="c tx" style="left:1462px;top:1038px;transform:scaleX(0.94);transform-origin:0 50%">NO</div>
<div class="c tx" style="left:1842px;top:1038px;transform:scaleX(0.94);transform-origin:0 50%">NO</div>
<div class="c nm" style="left:48px;top:1068px">1729400055500737695</div>
<div class="g" style="left:44px;top:1068px"></div>
<div class="c nm" style="left:652px;top:1068px">£549.31</div>
<div class="c nm" style="left:796px;top:1068px">2229</div>
<div class="g" style="left:792px;top:1068px"></div>
<div class="c tx" style="left:904px;top:1068px;letter-spacing:0.19px">Unavailable</div>
<div class="c tx" style="left:1048px;top:1068px;transform:scaleX(0.765);transform-origin:0 50%">YES</div>
<div class="c nm" style="left:1202px;top:1068px">1100</div>
<div class="g" style="left:1198px;top:1068px"></div>
<div class="c nm" style="left:1330px;top:1068px">£60.42</div>
<div class="c tx" style="left:1462px;top:1068px;transform:scaleX(0.94);transform-origin:0 50%">NO</div>
<div class="c nm" style="left:1598px;top:1068px">2</div>
<div class="g" style="left:1594px;top:1068px"></div>
<div class="c nm" style="left:1726px;top:1068px">0</div>
<div class="g" style="left:1722px;top:1068px"></div>
<div class="c tx" style="left:1842px;top:1068px;transform:scaleX(0.94);transform-origin:0 50%">NO</div>
<div class="c nm" style="left:48px;top:1098px">1729400060882095263</div>
<div class="g" style="left:44px;top:1098px"></div>
<div class="c nm" style="left:652px;top:1098px">£549.31</div>
<div class="c nm" style="left:796px;top:1098px">2432</div>
<div class="g" style="left:792px;top:1098px"></div>
<div class="c tx" style="left:904px;top:1098px;letter-spacing:0.19px">Unavailable</div>
<div class="c tx" style="left:1048px;top:1098px;transform:scaleX(0.765);transform-origin:0 50%">YES</div>
<div class="c nm" style="left:1202px;top:1098px">1100</div>
<div class="g" style="left:1198px;top:1098px"></div>
<div class="c nm" style="left:1330px;top:1098px">£60.42</div>
<div class="c tx" style="left:1462px;top:1098px;transform:scaleX(0.94);transform-origin:0 50%">NO</div>
<div class="c nm" style="left:1598px;top:1098px">2</div>
<div class="g" style="left:1594px;top:1098px"></div>
<div class="c nm" style="left:1726px;top:1098px">0</div>
<div class="g" style="left:1722px;top:1098px"></div>
<div class="c tx" style="left:1842px;top:1098px;transform:scaleX(0.94);transform-origin:0 50%">NO</div>
<div class="c nm" style="left:48px;top:1128px">1729400098482392223</div>
<div class="g" style="left:44px;top:1128px"></div>
<div class="c nm" style="left:652px;top:1128px">£162.00</div>
<div class="c nm" style="left:796px;top:1128px">3599964</div>
<div class="g" style="left:792px;top:1128px"></div>
<div class="c tx" style="left:904px;top:1128px;letter-spacing:0.25px">Available</div>
<div class="c tx" style="left:1048px;top:1128px;transform:scaleX(0.765);transform-origin:0 50%">YES</div>
<div class="c nm" style="left:1202px;top:1128px">1100</div>
<div class="g" style="left:1198px;top:1128px"></div>
<div class="c nm" style="left:1330px;top:1128px">£17.82</div>
<div class="c tx" style="left:1462px;top:1128px;transform:scaleX(0.94);transform-origin:0 50%">NO</div>
<div class="c nm" style="left:1598px;top:1128px">2</div>
<div class="g" style="left:1594px;top:1128px"></div>
<div class="c nm" style="left:1726px;top:1128px">0</div>
<div class="g" style="left:1722px;top:1128px"></div>
<div class="c tx" style="left:1842px;top:1128px;transform:scaleX(0.94);transform-origin:0 50%">NO</div>
<div class="c nm" style="left:48px;top:1158px">1729400551767510175</div>
<div class="g" style="left:44px;top:1158px"></div>
<div class="c nm" style="left:652px;top:1158px">£29.17</div>
<div class="c nm" style="left:796px;top:1158px">199998</div>
<div class="g" style="left:792px;top:1158px"></div>
<div class="c tx" style="left:904px;top:1158px;letter-spacing:0.19px">Unavailable</div>
<div class="c tx" style="left:1048px;top:1158px;transform:scaleX(0.94);transform-origin:0 50%">NO</div>
<div class="c tx" style="left:1462px;top:1158px;transform:scaleX(0.94);transform-origin:0 50%">NO</div>
<div class="c tx" style="left:1842px;top:1158px;transform:scaleX(0.94);transform-origin:0 50%">NO</div>
<div class="c nm" style="left:48px;top:1188px">1729400611059305631</div>
<div class="g" style="left:44px;top:1188px"></div>
<div class="c nm" style="left:652px;top:1188px">£150.00</div>
<div class="c nm" style="left:796px;top:1188px">299997</div>
<div class="g" style="left:792px;top:1188px"></div>
<div class="c tx" style="left:904px;top:1188px;letter-spacing:0.19px">Unavailable</div>
<div class="c tx" style="left:1048px;top:1188px;transform:scaleX(0.94);transform-origin:0 50%">NO</div>
<div class="c tx" style="left:1462px;top:1188px;transform:scaleX(0.94);transform-origin:0 50%">NO</div>
<div class="c tx" style="left:1842px;top:1188px;transform:scaleX(0.94);transform-origin:0 50%">NO</div>
<div class="c nm" style="left:48px;top:1218px">1729400616976288927</div>
<div class="g" style="left:44px;top:1218px"></div>
<div class="c nm" style="left:652px;top:1218px">£28.65</div>
<div class="c nm" style="left:796px;top:1218px">299997</div>
<div class="g" style="left:792px;top:1218px"></div>
<div class="c tx" style="left:904px;top:1218px;letter-spacing:0.19px">Unavailable</div>
<div class="c tx" style="left:1048px;top:1218px;transform:scaleX(0.94);transform-origin:0 50%">NO</div>
<div class="c tx" style="left:1462px;top:1218px;transform:scaleX(0.94);transform-origin:0 50%">NO</div>
<div class="c tx" style="left:1842px;top:1218px;transform:scaleX(0.94);transform-origin:0 50%">NO</div>
<div class="c nm" style="left:48px;top:1248px">1729400617188953247</div>
<div class="g" style="left:44px;top:1248px"></div>
<div class="c nm" style="left:652px;top:1248px">£28.65</div>
<div class="c nm" style="left:796px;top:1248px">99999</div>
<div class="g" style="left:792px;top:1248px"></div>
<div class="c tx" style="left:904px;top:1248px;letter-spacing:0.19px">Unavailable</div>
<div class="c tx" style="left:1048px;top:1248px;transform:scaleX(0.94);transform-origin:0 50%">NO</div>
<div class="c tx" style="left:1462px;top:1248px;transform:scaleX(0.94);transform-origin:0 50%">NO</div>
<div class="c tx" style="left:1842px;top:1248px;transform:scaleX(0.94);transform-origin:0 50%">NO</div>
<div class="c nm" style="left:48px;top:1278px">1729400639604690079</div>
<div class="g" style="left:44px;top:1278px"></div>
<div class="c nm" style="left:652px;top:1278px">£28.65</div>
<div class="c nm" style="left:796px;top:1278px">198</div>
<div class="g" style="left:792px;top:1278px"></div>
<div class="c tx" style="left:904px;top:1278px;letter-spacing:0.19px">Unavailable</div>
<div class="c tx" style="left:1048px;top:1278px;transform:scaleX(0.765);transform-origin:0 50%">YES</div>
<div class="c nm" style="left:1202px;top:1278px">1000</div>
<div class="g" style="left:1198px;top:1278px"></div>
<div class="c nm" style="left:1330px;top:1278px">£2.87</div>
<div class="c tx" style="left:1462px;top:1278px;transform:scaleX(0.94);transform-origin:0 50%">NO</div>
<div class="c nm" style="left:1598px;top:1278px">3</div>
<div class="g" style="left:1594px;top:1278px"></div>
<div class="c nm" style="left:1726px;top:1278px">0</div>
<div class="g" style="left:1722px;top:1278px"></div>
<div class="c tx" style="left:1842px;top:1278px;transform:scaleX(0.94);transform-origin:0 50%">NO</div>
<div class="c nm" style="left:48px;top:1308px">1729400639607114911</div>
<div class="g" style="left:44px;top:1308px"></div>
<div class="c nm" style="left:652px;top:1308px">£28.65</div>
<div class="c nm" style="left:796px;top:1308px">99999</div>
<div class="g" style="left:792px;top:1308px"></div>
<div class="c tx" style="left:904px;top:1308px;letter-spacing:0.19px">Unavailable</div>
<div class="c tx" style="left:1048px;top:1308px;transform:scaleX(0.94);transform-origin:0 50%">NO</div>
<div class="c tx" style="left:1462px;top:1308px;transform:scaleX(0.94);transform-origin:0 50%">NO</div>
<div class="c tx" style="left:1842px;top:1308px;transform:scaleX(0.94);transform-origin:0 50%">NO</div>
<div class="c nm" style="left:48px;top:1338px">1729400648740605087</div>
<div class="g" style="left:44px;top:1338px"></div>
<div class="c nm" style="left:652px;top:1338px">£28.65</div>
<div class="c nm" style="left:796px;top:1338px">199998</div>
<div class="g" style="left:792px;top:1338px"></div>
<div class="c tx" style="left:904px;top:1338px;letter-spacing:0.19px">Unavailable</div>
<div class="c tx" style="left:1048px;top:1338px;transform:scaleX(0.94);transform-origin:0 50%">NO</div>
<div class="c tx" style="left:1462px;top:1338px;transform:scaleX(0.94);transform-origin:0 50%">NO</div>
<div class="c tx" style="left:1842px;top:1338px;transform:scaleX(0.94);transform-origin:0 50%">NO</div>
<div class="c nm" style="left:48px;top:1368px">1729400726048967839</div>
<div class="g" style="left:44px;top:1368px"></div>
<div class="c nm" style="left:652px;top:1368px">£10.00</div>
<div class="c nm" style="left:796px;top:1368px">1233</div>
<div class="g" style="left:792px;top:1368px"></div>
<div class="c tx" style="left:904px;top:1368px;letter-spacing:0.19px">Unavailable</div>
<div class="c tx" style="left:1048px;top:1368px;transform:scaleX(0.765);transform-origin:0 50%">YES</div>
<div class="c nm" style="left:1202px;top:1368px">2000</div>
<div class="g" style="left:1198px;top:1368px"></div>
<div class="c nm" style="left:1330px;top:1368px">£2.00</div>
<div class="c tx" style="left:1462px;top:1368px;transform:scaleX(0.94);transform-origin:0 50%">NO</div>
<div class="c nm" style="left:1598px;top:1368px">3</div>
<div class="g" style="left:1594px;top:1368px"></div>
<div class="c nm" style="left:1726px;top:1368px">0</div>
<div class="g" style="left:1722px;top:1368px"></div>
<div class="c tx" style="left:1842px;top:1368px;transform:scaleX(0.94);transform-origin:0 50%">NO</div>
<div class="a" style="left:44px;top:1398px;width:12px;height:4px;background:#4a8235;clip-path:polygon(0 0,100% 0,67% 100%,0 100%)"></div>
<div class="a" style="left:792px;top:1398px;width:12px;height:4px;background:#4a8235;clip-path:polygon(0 0,100% 0,67% 100%,0 100%)"></div>
<div class="a" style="left:1198px;top:1398px;width:12px;height:4px;background:#4a8235;clip-path:polygon(0 0,100% 0,67% 100%,0 100%)"></div>
<div class="a" style="left:1594px;top:1398px;width:12px;height:4px;background:#4a8235;clip-path:polygon(0 0,100% 0,67% 100%,0 100%)"></div>
<div class="a" style="left:1722px;top:1398px;width:12px;height:4px;background:#4a8235;clip-path:polygon(0 0,100% 0,67% 100%,0 100%)"></div>
<div class="a" style="left:283px;top:435px;width:366px;height:961px;background:#e8e8e8;"></div>
<div class="a" style="left:283.0px;top:435.0px;width:25.3px;height:27.3px;background:rgb(235,235,235)"></div>
<div class="a" style="left:308.0px;top:435.0px;width:38.8px;height:27.3px;background:rgb(222,222,222)"></div>
<div class="a" style="left:346.5px;top:435.0px;width:38.8px;height:27.3px;background:rgb(225,225,225)"></div>
<div class="a" style="left:385.0px;top:435.0px;width:38.8px;height:27.3px;background:rgb(225,225,225)"></div>
<div class="a" style="left:423.5px;top:435.0px;width:38.8px;height:27.3px;background:rgb(236,236,236)"></div>
<div class="a" style="left:462.0px;top:435.0px;width:38.8px;height:27.3px;background:rgb(234,234,234)"></div>
<div class="a" style="left:500.5px;top:435.0px;width:38.8px;height:27.3px;background:rgb(235,235,235)"></div>
<div class="a" style="left:539.0px;top:435.0px;width:38.8px;height:27.3px;background:rgb(246,246,246)"></div>
<div class="a" style="left:577.5px;top:435.0px;width:38.8px;height:27.3px;background:rgb(255,255,255)"></div>
<div class="a" style="left:616.0px;top:435.0px;width:33.3px;height:27.3px;background:rgb(248,248,248)"></div>
<div class="a" style="left:283.0px;top:462.0px;width:25.3px;height:38.8px;background:rgb(236,236,236)"></div>
<div class="a" style="left:308.0px;top:462.0px;width:38.8px;height:38.8px;background:rgb(233,233,233)"></div>
<div class="a" style="left:346.5px;top:462.0px;width:38.8px;height:38.8px;background:rgb(233,233,233)"></div>
<div class="a" style="left:385.0px;top:462.0px;width:38.8px;height:38.8px;background:rgb(232,232,232)"></div>
<div class="a" style="left:423.5px;top:462.0px;width:38.8px;height:38.8px;background:rgb(233,233,233)"></div>
<div class="a" style="left:462.0px;top:462.0px;width:38.8px;height:38.8px;background:rgb(230,230,230)"></div>
<div class="a" style="left:500.5px;top:462.0px;width:38.8px;height:38.8px;background:rgb(233,233,233)"></div>
<div class="a" style="left:539.0px;top:462.0px;width:38.8px;height:38.8px;background:rgb(243,243,243)"></div>
<div class="a" style="left:577.5px;top:462.0px;width:38.8px;height:38.8px;background:rgb(253,253,253)"></div>
<div class="a" style="left:616.0px;top:462.0px;width:33.3px;height:38.8px;background:rgb(249,249,249)"></div>
<div class="a" style="left:283.0px;top:500.5px;width:25.3px;height:38.8px;background:rgb(238,238,238)"></div>
<div class="a" style="left:308.0px;top:500.5px;width:38.8px;height:38.8px;background:rgb(235,235,235)"></div>
<div class="a" style="left:346.5px;top:500.5px;width:38.8px;height:38.8px;background:rgb(237,237,237)"></div>
<div class="a" style="left:385.0px;top:500.5px;width:38.8px;height:38.8px;background:rgb(235,235,235)"></div>
<div class="a" style="left:423.5px;top:500.5px;width:38.8px;height:38.8px;background:rgb(243,243,243)"></div>
<div class="a" style="left:462.0px;top:500.5px;width:38.8px;height:38.8px;background:rgb(251,251,251)"></div>
<div class="a" style="left:500.5px;top:500.5px;width:38.8px;height:38.8px;background:rgb(253,253,253)"></div>
<div class="a" style="left:539.0px;top:500.5px;width:38.8px;height:38.8px;background:rgb(254,254,254)"></div>
<div class="a" style="left:577.5px;top:500.5px;width:38.8px;height:38.8px;background:rgb(254,254,254)"></div>
<div class="a" style="left:616.0px;top:500.5px;width:33.3px;height:38.8px;background:rgb(251,251,251)"></div>
<div class="a" style="left:283.0px;top:539.0px;width:25.3px;height:38.8px;background:rgb(231,231,231)"></div>
<div class="a" style="left:308.0px;top:539.0px;width:38.8px;height:38.8px;background:rgb(220,220,220)"></div>
<div class="a" style="left:346.5px;top:539.0px;width:38.8px;height:38.8px;background:rgb(221,221,221)"></div>
<div class="a" style="left:385.0px;top:539.0px;width:38.8px;height:38.8px;background:rgb(220,220,220)"></div>
<div class="a" style="left:423.5px;top:539.0px;width:38.8px;height:38.8px;background:rgb(220,220,220)"></div>
<div class="a" style="left:462.0px;top:539.0px;width:38.8px;height:38.8px;background:rgb(220,220,220)"></div>
<div class="a" style="left:500.5px;top:539.0px;width:38.8px;height:38.8px;background:rgb(221,221,221)"></div>
<div class="a" style="left:539.0px;top:539.0px;width:38.8px;height:38.8px;background:rgb(238,238,238)"></div>
<div class="a" style="left:577.5px;top:539.0px;width:38.8px;height:38.8px;background:rgb(237,237,237)"></div>
<div class="a" style="left:616.0px;top:539.0px;width:33.3px;height:38.8px;background:rgb(245,245,245)"></div>
<div class="a" style="left:283.0px;top:577.5px;width:25.3px;height:38.8px;background:rgb(230,230,230)"></div>
<div class="a" style="left:308.0px;top:577.5px;width:38.8px;height:38.8px;background:rgb(227,227,227)"></div>
<div class="a" style="left:346.5px;top:577.5px;width:38.8px;height:38.8px;background:rgb(227,227,227)"></div>
<div class="a" style="left:385.0px;top:577.5px;width:38.8px;height:38.8px;background:rgb(227,227,227)"></div>
<div class="a" style="left:423.5px;top:577.5px;width:38.8px;height:38.8px;background:rgb(228,228,228)"></div>
<div class="a" style="left:462.0px;top:577.5px;width:38.8px;height:38.8px;background:rgb(228,228,228)"></div>
<div class="a" style="left:500.5px;top:577.5px;width:38.8px;height:38.8px;background:rgb(228,228,228)"></div>
<div class="a" style="left:539.0px;top:577.5px;width:38.8px;height:38.8px;background:rgb(228,228,228)"></div>
<div class="a" style="left:577.5px;top:577.5px;width:38.8px;height:38.8px;background:rgb(227,227,227)"></div>
<div class="a" style="left:616.0px;top:577.5px;width:33.3px;height:38.8px;background:rgb(230,230,230)"></div>
<div class="a" style="left:283.0px;top:616.0px;width:25.3px;height:38.8px;background:rgb(233,233,233)"></div>
<div class="a" style="left:308.0px;top:616.0px;width:38.8px;height:38.8px;background:rgb(231,231,231)"></div>
<div class="a" style="left:346.5px;top:616.0px;width:38.8px;height:38.8px;background:rgb(229,229,229)"></div>
<div class="a" style="left:385.0px;top:616.0px;width:38.8px;height:38.8px;background:rgb(229,229,229)"></div>
<div class="a" style="left:423.5px;top:616.0px;width:38.8px;height:38.8px;background:rgb(233,233,233)"></div>
<div class="a" style="left:462.0px;top:616.0px;width:38.8px;height:38.8px;background:rgb(233,233,233)"></div>
<div class="a" style="left:500.5px;top:616.0px;width:38.8px;height:38.8px;background:rgb(232,232,232)"></div>
<div class="a" style="left:539.0px;top:616.0px;width:38.8px;height:38.8px;background:rgb(229,229,229)"></div>
<div class="a" style="left:577.5px;top:616.0px;width:38.8px;height:38.8px;background:rgb(228,228,228)"></div>
<div class="a" style="left:616.0px;top:616.0px;width:33.3px;height:38.8px;background:rgb(229,229,229)"></div>
<div class="a" style="left:283.0px;top:654.5px;width:25.3px;height:38.8px;background:rgb(228,228,228)"></div>
<div class="a" style="left:308.0px;top:654.5px;width:38.8px;height:38.8px;background:rgb(222,222,222)"></div>
<div class="a" style="left:346.5px;top:654.5px;width:38.8px;height:38.8px;background:rgb(219,219,219)"></div>
<div class="a" style="left:385.0px;top:654.5px;width:38.8px;height:38.8px;background:rgb(221,221,221)"></div>
<div class="a" style="left:423.5px;top:654.5px;width:38.8px;height:38.8px;background:rgb(225,225,225)"></div>
<div class="a" style="left:462.0px;top:654.5px;width:38.8px;height:38.8px;background:rgb(228,228,228)"></div>
<div class="a" style="left:500.5px;top:654.5px;width:38.8px;height:38.8px;background:rgb(228,228,228)"></div>
<div class="a" style="left:539.0px;top:654.5px;width:38.8px;height:38.8px;background:rgb(221,221,221)"></div>
<div class="a" style="left:577.5px;top:654.5px;width:38.8px;height:38.8px;background:rgb(225,225,225)"></div>
<div class="a" style="left:616.0px;top:654.5px;width:33.3px;height:38.8px;background:rgb(225,225,225)"></div>
<div class="a" style="left:283.0px;top:693.0px;width:25.3px;height:38.8px;background:rgb(224,224,224)"></div>
<div class="a" style="left:308.0px;top:693.0px;width:38.8px;height:38.8px;background:rgb(228,228,228)"></div>
<div class="a" style="left:346.5px;top:693.0px;width:38.8px;height:38.8px;background:rgb(236,236,236)"></div>
<div class="a" style="left:385.0px;top:693.0px;width:38.8px;height:38.8px;background:rgb(242,242,242)"></div>
<div class="a" style="left:423.5px;top:693.0px;width:38.8px;height:38.8px;background:rgb(243,243,243)"></div>
<div class="a" style="left:462.0px;top:693.0px;width:38.8px;height:38.8px;background:rgb(243,243,243)"></div>
<div class="a" style="left:500.5px;top:693.0px;width:38.8px;height:38.8px;background:rgb(243,243,243)"></div>
<div class="a" style="left:539.0px;top:693.0px;width:38.8px;height:38.8px;background:rgb(242,242,242)"></div>
<div class="a" style="left:577.5px;top:693.0px;width:38.8px;height:38.8px;background:rgb(242,242,242)"></div>
<div class="a" style="left:616.0px;top:693.0px;width:33.3px;height:38.8px;background:rgb(243,243,243)"></div>
<div class="a" style="left:283.0px;top:731.5px;width:25.3px;height:38.8px;background:rgb(235,235,235)"></div>
<div class="a" style="left:308.0px;top:731.5px;width:38.8px;height:38.8px;background:rgb(232,232,232)"></div>
<div class="a" style="left:346.5px;top:731.5px;width:38.8px;height:38.8px;background:rgb(233,233,233)"></div>
<div class="a" style="left:385.0px;top:731.5px;width:38.8px;height:38.8px;background:rgb(233,233,233)"></div>
<div class="a" style="left:423.5px;top:731.5px;width:38.8px;height:38.8px;background:rgb(233,233,233)"></div>
<div class="a" style="left:462.0px;top:731.5px;width:38.8px;height:38.8px;background:rgb(234,234,234)"></div>
<div class="a" style="left:500.5px;top:731.5px;width:38.8px;height:38.8px;background:rgb(232,232,232)"></div>
<div class="a" style="left:539.0px;top:731.5px;width:38.8px;height:38.8px;background:rgb(232,232,232)"></div>
<div class="a" style="left:577.5px;top:731.5px;width:38.8px;height:38.8px;background:rgb(231,231,231)"></div>
<div class="a" style="left:616.0px;top:731.5px;width:33.3px;height:38.8px;background:rgb(232,232,232)"></div>
<div class="a" style="left:283.0px;top:770.0px;width:25.3px;height:38.8px;background:rgb(232,232,232)"></div>
<div class="a" style="left:308.0px;top:770.0px;width:38.8px;height:38.8px;background:rgb(228,228,228)"></div>
<div class="a" style="left:346.5px;top:770.0px;width:38.8px;height:38.8px;background:rgb(229,229,229)"></div>
<div class="a" style="left:385.0px;top:770.0px;width:38.8px;height:38.8px;background:rgb(230,230,230)"></div>
<div class="a" style="left:423.5px;top:770.0px;width:38.8px;height:38.8px;background:rgb(237,237,237)"></div>
<div class="a" style="left:462.0px;top:770.0px;width:38.8px;height:38.8px;background:rgb(229,229,229)"></div>
<div class="a" style="left:500.5px;top:770.0px;width:38.8px;height:38.8px;background:rgb(234,234,234)"></div>
<div class="a" style="left:539.0px;top:770.0px;width:38.8px;height:38.8px;background:rgb(234,234,234)"></div>
<div class="a" style="left:577.5px;top:770.0px;width:38.8px;height:38.8px;background:rgb(236,236,236)"></div>
<div class="a" style="left:616.0px;top:770.0px;width:33.3px;height:38.8px;background:rgb(237,237,237)"></div>
<div class="a" style="left:283.0px;top:808.5px;width:25.3px;height:38.8px;background:rgb(229,229,229)"></div>
<div class="a" style="left:308.0px;top:808.5px;width:38.8px;height:38.8px;background:rgb(224,224,224)"></div>
<div class="a" style="left:346.5px;top:808.5px;width:38.8px;height:38.8px;background:rgb(225,225,225)"></div>
<div class="a" style="left:385.0px;top:808.5px;width:38.8px;height:38.8px;background:rgb(229,229,229)"></div>
<div class="a" style="left:423.5px;top:808.5px;width:38.8px;height:38.8px;background:rgb(219,219,219)"></div>
<div class="a" style="left:462.0px;top:808.5px;width:38.8px;height:38.8px;background:rgb(220,220,220)"></div>
<div class="a" style="left:500.5px;top:808.5px;width:38.8px;height:38.8px;background:rgb(218,218,218)"></div>
<div class="a" style="left:539.0px;top:808.5px;width:38.8px;height:38.8px;background:rgb(228,228,228)"></div>
<div class="a" style="left:577.5px;top:808.5px;width:38.8px;height:38.8px;background:rgb(244,244,244)"></div>
<div class="a" style="left:616.0px;top:808.5px;width:33.3px;height:38.8px;background:rgb(249,249,249)"></div>
<div class="a" style="left:283.0px;top:847.0px;width:25.3px;height:38.8px;background:rgb(229,229,229)"></div>
<div class="a" style="left:308.0px;top:847.0px;width:38.8px;height:38.8px;background:rgb(227,227,227)"></div>
<div class="a" style="left:346.5px;top:847.0px;width:38.8px;height:38.8px;background:rgb(226,226,226)"></div>
<div class="a" style="left:385.0px;top:847.0px;width:38.8px;height:38.8px;background:rgb(228,228,228)"></div>
<div class="a" style="left:423.5px;top:847.0px;width:38.8px;height:38.8px;background:rgb(226,226,226)"></div>
<div class="a" style="left:462.0px;top:847.0px;width:38.8px;height:38.8px;background:rgb(231,231,231)"></div>
<div class="a" style="left:500.5px;top:847.0px;width:38.8px;height:38.8px;background:rgb(230,230,230)"></div>
<div class="a" style="left:539.0px;top:847.0px;width:38.8px;height:38.8px;background:rgb(230,230,230)"></div>
<div class="a" style="left:577.5px;top:847.0px;width:38.8px;height:38.8px;background:rgb(233,233,233)"></div>
<div class="a" style="left:616.0px;top:847.0px;width:33.3px;height:38.8px;background:rgb(232,232,232)"></div>
<div class="a" style="left:283.0px;top:885.5px;width:25.3px;height:38.8px;background:rgb(232,232,232)"></div>
<div class="a" style="left:308.0px;top:885.5px;width:38.8px;height:38.8px;background:rgb(230,230,230)"></div>
<div class="a" style="left:346.5px;top:885.5px;width:38.8px;height:38.8px;background:rgb(229,229,229)"></div>
<div class="a" style="left:385.0px;top:885.5px;width:38.8px;height:38.8px;background:rgb(235,235,235)"></div>
<div class="a" style="left:423.5px;top:885.5px;width:38.8px;height:38.8px;background:rgb(235,235,235)"></div>
<div class="a" style="left:462.0px;top:885.5px;width:38.8px;height:38.8px;background:rgb(230,230,230)"></div>
<div class="a" style="left:500.5px;top:885.5px;width:38.8px;height:38.8px;background:rgb(232,232,232)"></div>
<div class="a" style="left:539.0px;top:885.5px;width:38.8px;height:38.8px;background:rgb(236,236,236)"></div>
<div class="a" style="left:577.5px;top:885.5px;width:38.8px;height:38.8px;background:rgb(235,235,235)"></div>
<div class="a" style="left:616.0px;top:885.5px;width:33.3px;height:38.8px;background:rgb(230,230,230)"></div>
<div class="a" style="left:283.0px;top:924.0px;width:25.3px;height:38.8px;background:rgb(230,230,230)"></div>
<div class="a" style="left:308.0px;top:924.0px;width:38.8px;height:38.8px;background:rgb(228,228,228)"></div>
<div class="a" style="left:346.5px;top:924.0px;width:38.8px;height:38.8px;background:rgb(228,228,228)"></div>
<div class="a" style="left:385.0px;top:924.0px;width:38.8px;height:38.8px;background:rgb(227,227,227)"></div>
<div class="a" style="left:423.5px;top:924.0px;width:38.8px;height:38.8px;background:rgb(226,226,226)"></div>
<div class="a" style="left:462.0px;top:924.0px;width:38.8px;height:38.8px;background:rgb(223,223,223)"></div>
<div class="a" style="left:500.5px;top:924.0px;width:38.8px;height:38.8px;background:rgb(225,225,225)"></div>
<div class="a" style="left:539.0px;top:924.0px;width:38.8px;height:38.8px;background:rgb(221,221,221)"></div>
<div class="a" style="left:577.5px;top:924.0px;width:38.8px;height:38.8px;background:rgb(220,220,220)"></div>
<div class="a" style="left:616.0px;top:924.0px;width:33.3px;height:38.8px;background:rgb(232,232,232)"></div>
<div class="a" style="left:283.0px;top:962.5px;width:25.3px;height:38.8px;background:rgb(228,228,228)"></div>
<div class="a" style="left:308.0px;top:962.5px;width:38.8px;height:38.8px;background:rgb(218,218,218)"></div>
<div class="a" style="left:346.5px;top:962.5px;width:38.8px;height:38.8px;background:rgb(222,222,222)"></div>
<div class="a" style="left:385.0px;top:962.5px;width:38.8px;height:38.8px;background:rgb(223,223,223)"></div>
<div class="a" style="left:423.5px;top:962.5px;width:38.8px;height:38.8px;background:rgb(223,223,223)"></div>
<div class="a" style="left:462.0px;top:962.5px;width:38.8px;height:38.8px;background:rgb(227,227,227)"></div>
<div class="a" style="left:500.5px;top:962.5px;width:38.8px;height:38.8px;background:rgb(221,221,221)"></div>
<div class="a" style="left:539.0px;top:962.5px;width:38.8px;height:38.8px;background:rgb(222,222,222)"></div>
<div class="a" style="left:577.5px;top:962.5px;width:38.8px;height:38.8px;background:rgb(227,227,227)"></div>
<div class="a" style="left:616.0px;top:962.5px;width:33.3px;height:38.8px;background:rgb(247,247,247)"></div>
<div class="a" style="left:283.0px;top:1001.0px;width:25.3px;height:38.8px;background:rgb(235,235,235)"></div>
<div class="a" style="left:308.0px;top:1001.0px;width:38.8px;height:38.8px;background:rgb(231,231,231)"></div>
<div class="a" style="left:346.5px;top:1001.0px;width:38.8px;height:38.8px;background:rgb(232,232,232)"></div>
<div class="a" style="left:385.0px;top:1001.0px;width:38.8px;height:38.8px;background:rgb(234,234,234)"></div>
<div class="a" style="left:423.5px;top:1001.0px;width:38.8px;height:38.8px;background:rgb(234,234,234)"></div>
<div class="a" style="left:462.0px;top:1001.0px;width:38.8px;height:38.8px;background:rgb(235,235,235)"></div>
<div class="a" style="left:500.5px;top:1001.0px;width:38.8px;height:38.8px;background:rgb(234,234,234)"></div>
<div class="a" style="left:539.0px;top:1001.0px;width:38.8px;height:38.8px;background:rgb(234,234,234)"></div>
<div class="a" style="left:577.5px;top:1001.0px;width:38.8px;height:38.8px;background:rgb(235,235,235)"></div>
<div class="a" style="left:616.0px;top:1001.0px;width:33.3px;height:38.8px;background:rgb(247,247,247)"></div>
<div class="a" style="left:283.0px;top:1039.5px;width:25.3px;height:38.8px;background:rgb(235,235,235)"></div>
<div class="a" style="left:308.0px;top:1039.5px;width:38.8px;height:38.8px;background:rgb(229,229,229)"></div>
<div class="a" style="left:346.5px;top:1039.5px;width:38.8px;height:38.8px;background:rgb(229,229,229)"></div>
<div class="a" style="left:385.0px;top:1039.5px;width:38.8px;height:38.8px;background:rgb(234,234,234)"></div>
<div class="a" style="left:423.5px;top:1039.5px;width:38.8px;height:38.8px;background:rgb(234,234,234)"></div>
<div class="a" style="left:462.0px;top:1039.5px;width:38.8px;height:38.8px;background:rgb(235,235,235)"></div>
<div class="a" style="left:500.5px;top:1039.5px;width:38.8px;height:38.8px;background:rgb(232,232,232)"></div>
<div class="a" style="left:539.0px;top:1039.5px;width:38.8px;height:38.8px;background:rgb(233,233,233)"></div>
<div class="a" style="left:577.5px;top:1039.5px;width:38.8px;height:38.8px;background:rgb(236,236,236)"></div>
<div class="a" style="left:616.0px;top:1039.5px;width:33.3px;height:38.8px;background:rgb(247,247,247)"></div>
<div class="a" style="left:283.0px;top:1078.0px;width:25.3px;height:38.8px;background:rgb(228,228,228)"></div>
<div class="a" style="left:308.0px;top:1078.0px;width:38.8px;height:38.8px;background:rgb(225,225,225)"></div>
<div class="a" style="left:346.5px;top:1078.0px;width:38.8px;height:38.8px;background:rgb(219,219,219)"></div>
<div class="a" style="left:385.0px;top:1078.0px;width:38.8px;height:38.8px;background:rgb(220,220,220)"></div>
<div class="a" style="left:423.5px;top:1078.0px;width:38.8px;height:38.8px;background:rgb(220,220,220)"></div>
<div class="a" style="left:462.0px;top:1078.0px;width:38.8px;height:38.8px;background:rgb(222,222,222)"></div>
<div class="a" style="left:500.5px;top:1078.0px;width:38.8px;height:38.8px;background:rgb(222,222,222)"></div>
<div class="a" style="left:539.0px;top:1078.0px;width:38.8px;height:38.8px;background:rgb(218,218,218)"></div>
<div class="a" style="left:577.5px;top:1078.0px;width:38.8px;height:38.8px;background:rgb(221,221,221)"></div>
<div class="a" style="left:616.0px;top:1078.0px;width:33.3px;height:38.8px;background:rgb(225,225,225)"></div>
<div class="a" style="left:283.0px;top:1116.5px;width:25.3px;height:38.8px;background:rgb(233,233,233)"></div>
<div class="a" style="left:308.0px;top:1116.5px;width:38.8px;height:38.8px;background:rgb(232,232,232)"></div>
<div class="a" style="left:346.5px;top:1116.5px;width:38.8px;height:38.8px;background:rgb(233,233,233)"></div>
<div class="a" style="left:385.0px;top:1116.5px;width:38.8px;height:38.8px;background:rgb(232,232,232)"></div>
<div class="a" style="left:423.5px;top:1116.5px;width:38.8px;height:38.8px;background:rgb(232,232,232)"></div>
<div class="a" style="left:462.0px;top:1116.5px;width:38.8px;height:38.8px;background:rgb(235,235,235)"></div>
<div class="a" style="left:500.5px;top:1116.5px;width:38.8px;height:38.8px;background:rgb(233,233,233)"></div>
<div class="a" style="left:539.0px;top:1116.5px;width:38.8px;height:38.8px;background:rgb(226,226,226)"></div>
<div class="a" style="left:577.5px;top:1116.5px;width:38.8px;height:38.8px;background:rgb(225,225,225)"></div>
<div class="a" style="left:616.0px;top:1116.5px;width:33.3px;height:38.8px;background:rgb(225,225,225)"></div>
<div class="a" style="left:283.0px;top:1155.0px;width:25.3px;height:38.8px;background:rgb(238,238,238)"></div>
<div class="a" style="left:308.0px;top:1155.0px;width:38.8px;height:38.8px;background:rgb(236,236,236)"></div>
<div class="a" style="left:346.5px;top:1155.0px;width:38.8px;height:38.8px;background:rgb(236,236,236)"></div>
<div class="a" style="left:385.0px;top:1155.0px;width:38.8px;height:38.8px;background:rgb(235,235,235)"></div>
<div class="a" style="left:423.5px;top:1155.0px;width:38.8px;height:38.8px;background:rgb(235,235,235)"></div>
<div class="a" style="left:462.0px;top:1155.0px;width:38.8px;height:38.8px;background:rgb(235,235,235)"></div>
<div class="a" style="left:500.5px;top:1155.0px;width:38.8px;height:38.8px;background:rgb(235,235,235)"></div>
<div class="a" style="left:539.0px;top:1155.0px;width:38.8px;height:38.8px;background:rgb(251,251,251)"></div>
<div class="a" style="left:577.5px;top:1155.0px;width:38.8px;height:38.8px;background:rgb(253,253,253)"></div>
<div class="a" style="left:616.0px;top:1155.0px;width:33.3px;height:38.8px;background:rgb(250,250,250)"></div>
<div class="a" style="left:283.0px;top:1193.5px;width:25.3px;height:38.8px;background:rgb(230,230,230)"></div>
<div class="a" style="left:308.0px;top:1193.5px;width:38.8px;height:38.8px;background:rgb(225,225,225)"></div>
<div class="a" style="left:346.5px;top:1193.5px;width:38.8px;height:38.8px;background:rgb(226,226,226)"></div>
<div class="a" style="left:385.0px;top:1193.5px;width:38.8px;height:38.8px;background:rgb(229,229,229)"></div>
<div class="a" style="left:423.5px;top:1193.5px;width:38.8px;height:38.8px;background:rgb(229,229,229)"></div>
<div class="a" style="left:462.0px;top:1193.5px;width:38.8px;height:38.8px;background:rgb(229,229,229)"></div>
<div class="a" style="left:500.5px;top:1193.5px;width:38.8px;height:38.8px;background:rgb(224,224,224)"></div>
<div class="a" style="left:539.0px;top:1193.5px;width:38.8px;height:38.8px;background:rgb(225,225,225)"></div>
<div class="a" style="left:577.5px;top:1193.5px;width:38.8px;height:38.8px;background:rgb(227,227,227)"></div>
<div class="a" style="left:616.0px;top:1193.5px;width:33.3px;height:38.8px;background:rgb(228,228,228)"></div>
<div class="a" style="left:283.0px;top:1232.0px;width:25.3px;height:38.8px;background:rgb(230,230,230)"></div>
<div class="a" style="left:308.0px;top:1232.0px;width:38.8px;height:38.8px;background:rgb(225,225,225)"></div>
<div class="a" style="left:346.5px;top:1232.0px;width:38.8px;height:38.8px;background:rgb(226,226,226)"></div>
<div class="a" style="left:385.0px;top:1232.0px;width:38.8px;height:38.8px;background:rgb(218,218,218)"></div>
<div class="a" style="left:423.5px;top:1232.0px;width:38.8px;height:38.8px;background:rgb(220,220,220)"></div>
<div class="a" style="left:462.0px;top:1232.0px;width:38.8px;height:38.8px;background:rgb(222,222,222)"></div>
<div class="a" style="left:500.5px;top:1232.0px;width:38.8px;height:38.8px;background:rgb(222,222,222)"></div>
<div class="a" style="left:539.0px;top:1232.0px;width:38.8px;height:38.8px;background:rgb(248,248,248)"></div>
<div class="a" style="left:577.5px;top:1232.0px;width:38.8px;height:38.8px;background:rgb(254,254,254)"></div>
<div class="a" style="left:616.0px;top:1232.0px;width:33.3px;height:38.8px;background:rgb(250,250,250)"></div>
<div class="a" style="left:283.0px;top:1270.5px;width:25.3px;height:38.8px;background:rgb(236,236,236)"></div>
<div class="a" style="left:308.0px;top:1270.5px;width:38.8px;height:38.8px;background:rgb(235,235,235)"></div>
<div class="a" style="left:346.5px;top:1270.5px;width:38.8px;height:38.8px;background:rgb(236,236,236)"></div>
<div class="a" style="left:385.0px;top:1270.5px;width:38.8px;height:38.8px;background:rgb(229,229,229)"></div>
<div class="a" style="left:423.5px;top:1270.5px;width:38.8px;height:38.8px;background:rgb(235,235,235)"></div>
<div class="a" style="left:462.0px;top:1270.5px;width:38.8px;height:38.8px;background:rgb(235,235,235)"></div>
<div class="a" style="left:500.5px;top:1270.5px;width:38.8px;height:38.8px;background:rgb(233,233,233)"></div>
<div class="a" style="left:539.0px;top:1270.5px;width:38.8px;height:38.8px;background:rgb(248,248,248)"></div>
<div class="a" style="left:577.5px;top:1270.5px;width:38.8px;height:38.8px;background:rgb(252,252,252)"></div>
<div class="a" style="left:616.0px;top:1270.5px;width:33.3px;height:38.8px;background:rgb(250,250,250)"></div>
<div class="a" style="left:283.0px;top:1309.0px;width:25.3px;height:38.8px;background:rgb(234,234,234)"></div>
<div class="a" style="left:308.0px;top:1309.0px;width:38.8px;height:38.8px;background:rgb(232,232,232)"></div>
<div class="a" style="left:346.5px;top:1309.0px;width:38.8px;height:38.8px;background:rgb(235,235,235)"></div>
<div class="a" style="left:385.0px;top:1309.0px;width:38.8px;height:38.8px;background:rgb(235,235,235)"></div>
<div class="a" style="left:423.5px;top:1309.0px;width:38.8px;height:38.8px;background:rgb(236,236,236)"></div>
<div class="a" style="left:462.0px;top:1309.0px;width:38.8px;height:38.8px;background:rgb(233,233,233)"></div>
<div class="a" style="left:500.5px;top:1309.0px;width:38.8px;height:38.8px;background:rgb(229,229,229)"></div>
<div class="a" style="left:539.0px;top:1309.0px;width:38.8px;height:38.8px;background:rgb(249,249,249)"></div>
<div class="a" style="left:577.5px;top:1309.0px;width:38.8px;height:38.8px;background:rgb(255,255,255)"></div>
<div class="a" style="left:616.0px;top:1309.0px;width:33.3px;height:38.8px;background:rgb(250,250,250)"></div>
<div class="a" style="left:283.0px;top:1347.5px;width:25.3px;height:40.8px;background:rgb(230,230,230)"></div>
<div class="a" style="left:308.0px;top:1347.5px;width:38.8px;height:40.8px;background:rgb(225,225,225)"></div>
<div class="a" style="left:346.5px;top:1347.5px;width:38.8px;height:40.8px;background:rgb(226,226,226)"></div>
<div class="a" style="left:385.0px;top:1347.5px;width:38.8px;height:40.8px;background:rgb(224,224,224)"></div>
<div class="a" style="left:423.5px;top:1347.5px;width:38.8px;height:40.8px;background:rgb(222,222,222)"></div>
<div class="a" style="left:462.0px;top:1347.5px;width:38.8px;height:40.8px;background:rgb(224,224,224)"></div>
<div class="a" style="left:500.5px;top:1347.5px;width:38.8px;height:40.8px;background:rgb(227,227,227)"></div>
<div class="a" style="left:539.0px;top:1347.5px;width:38.8px;height:40.8px;background:rgb(240,240,240)"></div>
<div class="a" style="left:577.5px;top:1347.5px;width:38.8px;height:40.8px;background:rgb(245,245,245)"></div>
<div class="a" style="left:616.0px;top:1347.5px;width:33.3px;height:40.8px;background:rgb(246,246,246)"></div>
<div class="a" style="left:283.0px;top:1388.0px;width:25.3px;height:8.3px;background:rgb(180,180,180)"></div>
<div class="a" style="left:308.0px;top:1388.0px;width:38.8px;height:8.3px;background:rgb(156,156,156)"></div>
<div class="a" style="left:346.5px;top:1388.0px;width:38.8px;height:8.3px;background:rgb(156,156,156)"></div>
<div class="a" style="left:385.0px;top:1388.0px;width:38.8px;height:8.3px;background:rgb(156,156,156)"></div>
<div class="a" style="left:423.5px;top:1388.0px;width:38.8px;height:8.3px;background:rgb(156,156,156)"></div>
<div class="a" style="left:462.0px;top:1388.0px;width:38.8px;height:8.3px;background:rgb(156,156,156)"></div>
<div class="a" style="left:500.5px;top:1388.0px;width:38.8px;height:8.3px;background:rgb(156,156,156)"></div>
<div class="a" style="left:539.0px;top:1388.0px;width:38.8px;height:8.3px;background:rgb(156,156,156)"></div>
<div class="a" style="left:577.5px;top:1388.0px;width:38.8px;height:8.3px;background:rgb(156,156,156)"></div>
<div class="a" style="left:616.0px;top:1388.0px;width:33.3px;height:8.3px;background:rgb(158,158,158)"></div>
<div class="a" style="left:0px;top:1402px;width:2842px;height:52px;background:#323232;"></div>
<div class="a" style="left:0px;top:1401.6px;width:2842px;height:2.2px;background:linear-gradient(#8a8a8a,#3a3a3a);"></div>
<div class="a" style="left:120px;top:1402px;width:156.6px;height:44.5px;background:#fff;border-radius:0 0 7px 7px;box-shadow:0 1px 1.5px #8a8a8a;"></div>
<div class="t " style="left:158.5px;top:1412.0px;font-size:23.5px;line-height:31px;color:#4f8a5b;font-weight:bold;letter-spacing:-0.11px;">Sheet1</div>
<div class="a" style="left:28px;top:1420px;width:0;height:0;border-top:10.2px solid transparent;border-bottom:10.2px solid transparent;border-right:14.5px solid #6b6b6b"></div>
<div class="a" style="left:74px;top:1420px;width:0;height:0;border-top:10.2px solid transparent;border-bottom:10.2px solid transparent;border-left:14.5px solid #6b6b6b"></div>
<div class="a" style="left:306.3px;top:1426.3px;width:19.7px;height:3.2px;background:#c6c6c6;"></div>
<div class="a" style="left:314.6px;top:1418px;width:3.2px;height:19.7px;background:#c6c6c6;"></div>
<div class="a" style="left:351.6px;top:1404.6px;width:1.6px;height:40px;background:#5e5e5e;"></div>
<div class="a" style="left:0px;top:1453.9px;width:2842px;height:1.8px;background:#050505;"></div>
<div class="a" style="left:0px;top:1455.6px;width:2842px;height:42.4px;background:linear-gradient(#4a4a4a,#3c3c3c);"></div>
<div class="t " style="left:47.5px;top:1463.3px;font-size:22.6px;line-height:29px;color:#e6e6e6;letter-spacing:0.54px;-webkit-text-stroke:0.3px #e6e6e6;">Ready</div>
<div class="t " style="left:193.0px;top:1463.3px;font-size:22.6px;line-height:29px;color:#e6e6e6;letter-spacing:1.31px;-webkit-text-stroke:0.3px #e6e6e6;">Accessibility: Good to go</div>
<div class="a" style="left:2204px;top:1455px;width:74px;height:43px;background:#5d5d5d;"></div>
<div class="a" style="left:2436px;top:1475.5px;width:16px;height:3.5px;background:#f0f0f0;"></div>
<div class="a" style="left:2466px;top:1473px;width:200px;height:9px;background:#7c7c7c;border-radius:5px;"></div>
<div class="a" style="left:2550px;top:1461.3px;width:32px;height:32px;background:#a9a9a9;border-radius:50%;"></div>
<div class="a" style="left:2680px;top:1475.6px;width:16.4px;height:3.5px;background:#f0f0f0;"></div>
<div class="a" style="left:2686.4px;top:1469.2px;width:3.5px;height:16.4px;background:#f0f0f0;"></div>
<div class="t " style="left:2731.0px;top:1463.7px;font-size:22.6px;line-height:29px;color:#e6e6e6;letter-spacing:1.07px;-webkit-text-stroke:0.3px #e6e6e6;">100%</div>
<svg width="2842" height="1498" viewBox="0 0 2842 1498" style="pointer-events:none"><rect stroke="#f2f2f2" stroke-width="2.4" fill="none" x="2229.4" y="1465.6" width="23.6" height="22.6" rx="1.5"/><path stroke="#f2f2f2" stroke-width="2.4" fill="none" stroke-width="2.2" d="M2237.2 1465.6 V1488.2 M2245.4 1465.6 V1488.2 M2229.4 1473 H2253 M2229.4 1481 H2253"/><rect stroke="#f2f2f2" stroke-width="2.4" fill="none" x="2300.2" y="1465.6" width="25.6" height="22.6" rx="1.5"/><rect stroke="#f2f2f2" stroke-width="2.4" fill="none" stroke-width="2" x="2306" y="1470.2" width="14" height="13.6"/><path stroke="#f2f2f2" stroke-width="2.4" fill="none" stroke-width="1.8" d="M2309 1474 H2317 M2309 1477.2 H2317 M2309 1480.4 H2317"/><rect stroke="#f2f2f2" stroke-width="2.4" fill="none" x="2371.4" y="1465.6" width="25.6" height="22.6" rx="1.5"/><path stroke="#f2f2f2" stroke-width="2.4" fill="none" stroke-width="2.2" d="M2379.4 1465.6 V1478.6 M2387.8 1465.6 V1478.6 M2371.4 1478.6 H2387.8"/><circle stroke="#c4c4c4" stroke-width="1.7" fill="none" stroke-linejoin="round" stroke-linecap="round" cx="168.9" cy="1466" r="3.2"/><path stroke="#c4c4c4" stroke-width="1.7" fill="none" stroke-linejoin="round" stroke-linecap="round" d="M157.4 1469.4 C160 1468.4 164 1470.6 168.9 1470.6 C173.800 1470.6 177.8 1468.4 180.400 1469.400 C182 1470.2 181.6 1472.6 180 1473 L174.6 1474.6 V1479 M163.2 1474.6 L157.800 1473 C156.200 1472.600 155.800 1470.200 157.400 1469.400 M163.200 1474.600 C163.200 1481 161.400 1486 159.800 1489.600 C159.200 1491.400 161.800 1492.400 162.600 1490.800 L166.400 1482.400 C167.200 1480.800 169 1480.600 169.800 1481.800"/><path d="M171.2 1486.2 L176.6 1491 L187 1480.600" stroke="#c4c4c4" stroke-width="2.2" fill="none" stroke-linecap="round" stroke-linejoin="round"/></svg>
<div class="a" style="left:0px;top:0px;width:18px;height:18px;background:radial-gradient(circle at 100% 100%,transparent 17.3px,#101010 18.3px)"></div>
<div class="a" style="left:2822px;top:0px;width:18px;height:18px;background:radial-gradient(circle at 0 100%,transparent 17.3px,#141414 18.3px)"></div>
<div class="a" style="left:0px;top:1478px;width:20px;height:20px;background:radial-gradient(circle at 100% 0,transparent 19.3px,#161616 20.3px)"></div>
<div class="a" style="left:2820px;top:1478px;width:20px;height:20px;background:radial-gradient(circle at 0 0,transparent 19.3px,#6f7b73 20.3px)"></div>
<div class="a" style="left:2839.4px;top:14px;width:1px;height:316px;background:#4c4c4c;"></div>
<div class="a" style="left:2840.2px;top:0px;width:2px;height:330px;background:#1e1e1e;"></div>
<div class="a" style="left:2840.2px;top:1402px;width:2px;height:80px;background:#262626;"></div>
</body></html>
